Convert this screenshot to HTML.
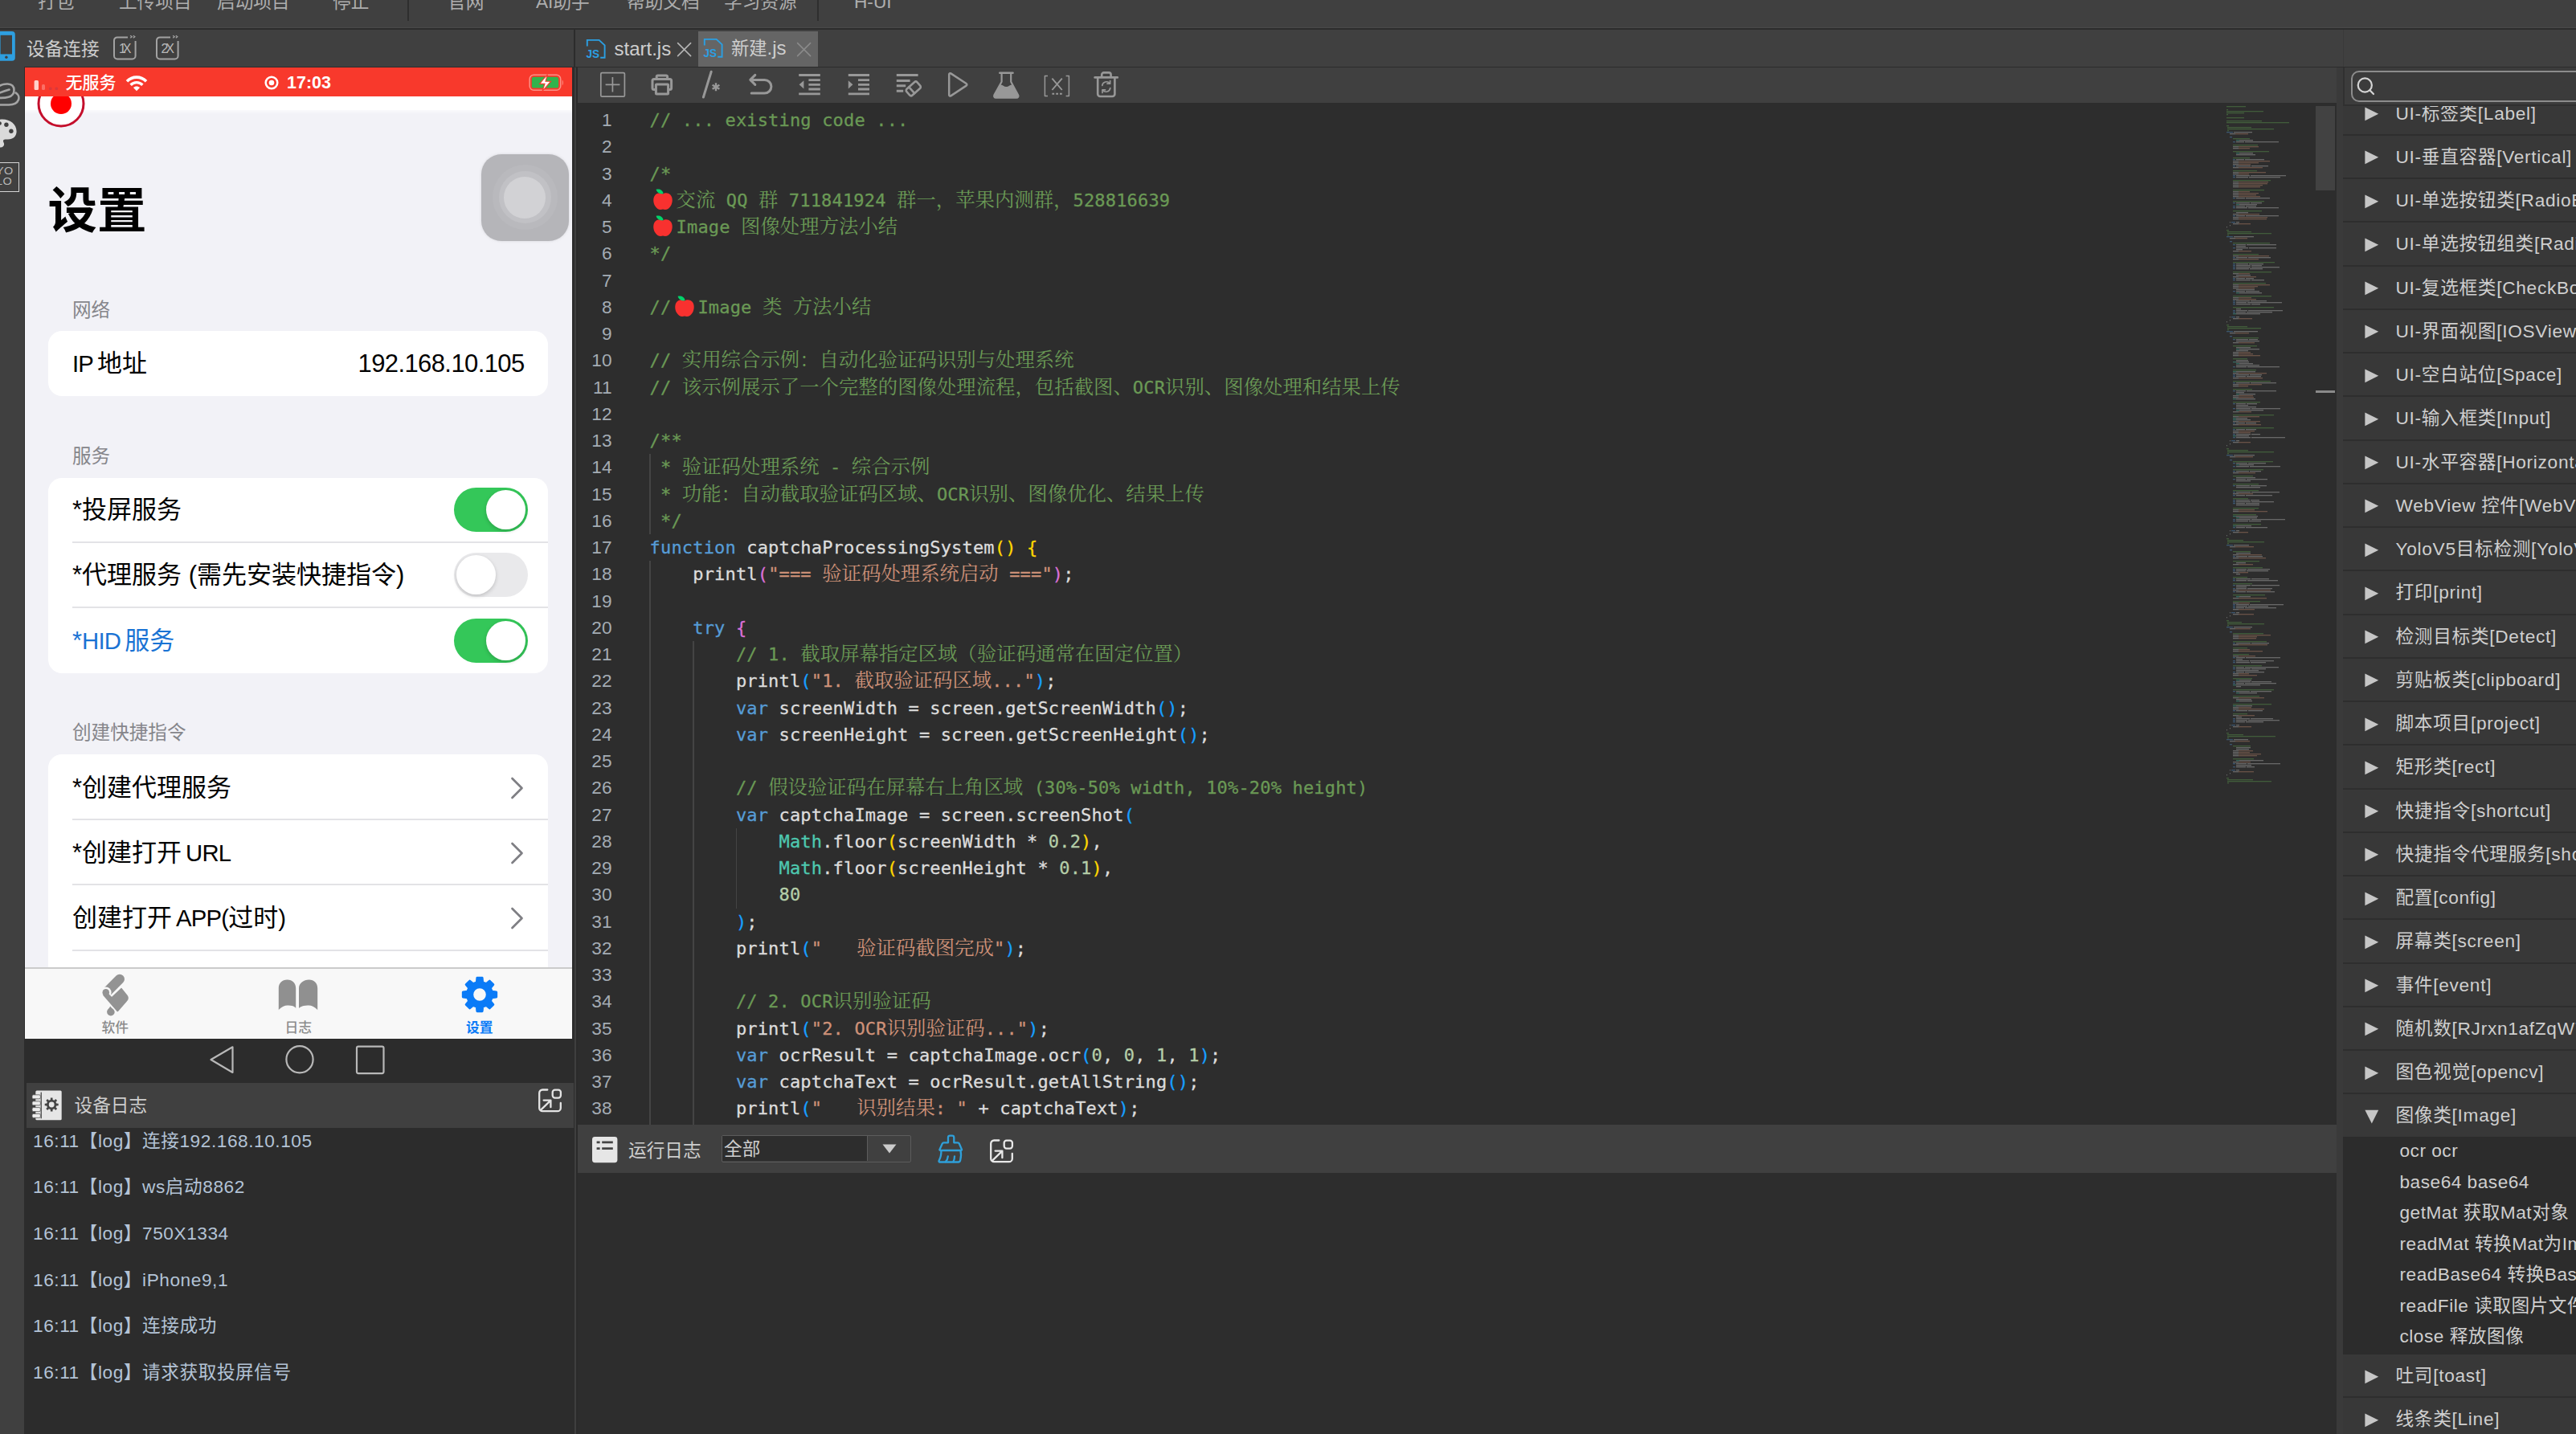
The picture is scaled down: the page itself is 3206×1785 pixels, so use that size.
<!DOCTYPE html>
<html lang="zh-CN">
<head>
<meta charset="utf-8">
<title>IDE</title>
<style>
html,body{margin:0;padding:0}
body{width:3206px;height:1785px;overflow:hidden;background:#2c2c2c;position:relative;
 font-family:"Liberation Sans","Noto Sans CJK SC",sans-serif;font-size:22.67px;color:#c8c8c8}
div,svg{position:absolute;box-sizing:border-box}
.t{white-space:nowrap;line-height:30px;height:30px}
svg{overflow:visible}
/* top menu */
#topbar{left:0;top:0;width:3206px;height:34px;background:#404040;overflow:hidden}
#topbar .t{top:-13px;color:#aeaeae}
#topbar i{position:absolute;top:0;width:2px;height:26px;background:#2e2e2e}
/* left */
#lhead{left:0;top:37px;width:714px;height:46px;background:#404040;overflow:hidden}
#side{left:0;top:83px;width:30px;height:1702px;background:#404040;overflow:hidden}
#phone{left:31px;top:84px;width:681px;height:1209px;background:#f2f2f7;overflow:hidden;color:#000;
 font-family:"Liberation Sans","Noto Sans CJK SC",sans-serif}
#phone .card{left:29px;width:622px;background:#fff;border-radius:17px;overflow:hidden}
#phone .lab{left:59px;font-size:23.6px;color:#86868b;line-height:30px;white-space:nowrap}
#phone .row{left:59px;font-size:31px;word-spacing:-3.6px;line-height:40px;white-space:nowrap;color:#000}
#phone .la{font-size:29.3px;letter-spacing:-.8px}
#phone .sep{left:59px;width:592px;height:2px;background:#e3e3e6}
.tog{left:533.5px;width:92px;height:55px;border-radius:28px;background:#34c759}
.tog b{position:absolute;right:3px;top:3px;width:49px;height:49px;border-radius:50%;background:#fff;box-shadow:0 2px 5px rgba(0,0,0,.18)}
.tog.off{background:#e9e9eb}
.tog.off b{right:auto;left:3px}
#dlhead{left:33px;top:1347.5px;width:681px;height:56px;background:#404040}
.log{left:41px;letter-spacing:.55px;color:#b3c3d6;white-space:nowrap;line-height:30px;height:30px}
/* editor */
#tabbar{left:716px;top:37px;width:2490px;height:46px;background:#404040}
#toolbar{left:717px;top:84px;width:2191px;height:44px;background:#404040}
#code{left:717px;top:128px;width:2191px;height:1271.5px;background:#2d2d2d;overflow:hidden}
#runhead{left:716px;top:1399.5px;width:2192px;height:60px;background:#404040}
#runbody{left:717px;top:1459.5px;width:2191px;height:326px;background:#2d2d2d}
.ln{left:0;width:44.5px;text-align:right;color:#a4acb4;font-size:22.67px;line-height:33.25px;height:33.25px;white-space:nowrap}
.cl{left:91.6px;font-family:"DejaVu Sans Mono","Liberation Mono","Noto Serif CJK SC",monospace;font-size:22px;letter-spacing:.166px;line-height:33.25px;height:33.25px;white-space:pre;color:#dcdcdc;-webkit-text-stroke:.3px}
.cl .z{font-family:"Noto Serif CJK SC",serif;font-size:24.4px;letter-spacing:0;line-height:0;-webkit-text-stroke:0}
.c{color:#6a9955}.k{color:#569cd6}.s{color:#ce9178}.n{color:#b5cea8}.m{color:#4ec9b0}
.b1{color:#ffd700}.b2{color:#da70d6}.b3{color:#179fff}
.ig{width:1.5px;background:#444}
.ap{display:inline-block;position:relative;width:33px;height:20px;vertical-align:baseline}
.aps{left:3.4px;top:-2.3px}
.gp{display:inline-block;width:43px}
/* right */
#gap{left:2908px;top:84px;width:8px;height:1701px;background:#3a3a3a}
#rp{left:2916px;top:84px;width:290px;height:1701px;background:#383838;overflow:hidden}
.tr{left:0;width:290px;height:54.25px;border-bottom:2px solid #2e2e2e}
.tr .t{left:65.5px;top:11px;color:#cfcfcf;letter-spacing:.7px}
.tr svg{left:27px;top:18.5px}
.ch{left:70.5px;letter-spacing:.5px;color:#cfcfcf;white-space:nowrap;line-height:30px;height:30px}
</style>
</head>
<body>
<!-- ===== top menu ===== -->
<div id="topbar">
 <div class="t" style="left:47px">打包</div>
 <div class="t" style="left:148px">上传项目</div>
 <div class="t" style="left:270px">启动项目</div>
 <div class="t" style="left:414px">停止</div>
 <i style="left:507px"></i>
 <div class="t" style="left:557px">官网</div>
 <div class="t" style="left:667px">AI助手</div>
 <div class="t" style="left:780px">帮助文档</div>
 <div class="t" style="left:901px">学习资源</div>
 <i style="left:1017px"></i>
 <div class="t" style="left:1063px">H-UI</div>
</div>
<div style="left:0;top:34px;width:3206px;height:1px;background:#494949"></div>

<!-- ===== left header ===== -->
<div id="lhead">
 <svg width="22" height="37" style="left:-3px;top:1.7px" viewBox="0 0 22 37">
  <rect x="0" y="0" width="21.8" height="36.7" rx="4" fill="#2e9fe0"/>
  <rect x="3.6" y="4.8" width="14.4" height="23.6" fill="#404040"/>
  <circle cx="10.9" cy="32.2" r="1.7" fill="#404040"/>
 </svg>
 <div class="t" style="left:33px;top:9px;color:#cdcdcd">设备连接</div>
 <svg width="32" height="32" style="left:140px;top:6px" viewBox="0 0 32 32" fill="none" stroke="#a2a2a2" stroke-width="2">
  <path d="M19 3.4H6a4 4 0 0 0-4 4V26.4a4 4 0 0 0 4 4H24.6a4 4 0 0 0 4-4V8"/>
  <path d="M22.2 1.2l2 1.5-2 1.5M25.8 1.2l2 1.5-2 1.5" stroke-width="1.3"/>
  <text x="8" y="22.5" font-family="Liberation Sans, sans-serif" font-size="16" fill="#b8b8b8" stroke="none" textLength="15.5">1X</text>
 </svg>
 <svg width="32" height="32" style="left:192.5px;top:6px" viewBox="0 0 32 32" fill="none" stroke="#a2a2a2" stroke-width="2">
  <path d="M19 3.4H6a4 4 0 0 0-4 4V26.4a4 4 0 0 0 4 4H24.6a4 4 0 0 0 4-4V8"/>
  <path d="M22.2 1.2l2 1.5-2 1.5M25.8 1.2l2 1.5-2 1.5" stroke-width="1.3"/>
  <text x="7.4" y="22.5" font-family="Liberation Sans, sans-serif" font-size="16" fill="#b8b8b8" stroke="none" textLength="16.5">2X</text>
 </svg>
</div>

<!-- ===== left icon strip ===== -->
<div id="side">
 <svg width="30" height="60" style="left:0;top:10px" viewBox="0 0 30 60" fill="none" stroke="#a4a4a4" stroke-width="2.6" stroke-linecap="round">
  <path d="M-3 15.5C3 10.5 17.5 8.5 17.5 19.2C17.5 28.8 6 29.3 -3 28.8"/>
  <path d="M-3 23.5C3 21 8 19.5 11.5 18.5"/>
  <path d="M19.5 22.5C26 26 25 37.5 11 37.5L-3 37.5"/>
 </svg>
 <svg width="30" height="40" style="left:0;top:64px" viewBox="0 0 30 40">
  <path d="M-14 18C-14 8 -6 1.5 3 1.5C13 1.5 20.6 8 20.6 16.5C20.6 23 16 26.5 10 26.5L6.5 26.5C4 26.5 3.4 28.5 4.6 30.5C6 33 4.5 36.5 0.5 36.5C-8 36.5 -14 28 -14 18Z" fill="#dadada"/>
  <circle cx="7.9" cy="8.3" r="2.7" fill="#404040"/>
  <circle cx="13.9" cy="16.2" r="2.7" fill="#404040"/>
  <circle cx="-0.5" cy="6.5" r="2.4" fill="#404040"/>
 </svg>
 <div style="left:-10px;top:118.5px;width:34px;height:37px;border:1.6px solid #d4d4d4"></div>
 <div style="left:-5px;top:124px;font-size:12px;line-height:12.6px;color:#b9b9b9;letter-spacing:.4px;transform:scaleX(1.2);transform-origin:0 0;white-space:nowrap">YO<br>LO</div>
</div>
<!-- ===== phone mirror ===== -->
<div style="left:715px;top:84px;width:2px;height:1701px;background:#3f3f3f"></div>
<div id="phone">
 <!-- white strip under status bar -->
 <div style="left:0;top:36px;width:681px;height:17px;background:#fff"></div>
 <div style="left:0;top:53px;width:681px;height:5px;background:linear-gradient(#fafafc,#f2f2f7)"></div>
 <!-- record indicator -->
 <svg width="64" height="64" style="left:13.4px;top:13px" viewBox="0 0 64 64">
  <circle cx="32" cy="32" r="28" fill="#fff" stroke="#c40f2c" stroke-width="3"/>
  <circle cx="32" cy="32" r="13" fill="#ff0000"/>
 </svg>
 <!-- status bar -->
 <div style="left:0;top:0;width:681px;height:36px;background:#f8392c"></div>
 <svg width="36" height="16" style="left:11px;top:14px" viewBox="0 0 36 16">
  <rect x="0.6" y="2" width="5.4" height="12" rx="1.5" fill="#ffd0ca"/>
  <rect x="10" y="7" width="4" height="7" rx="1.5" fill="#fb7066"/>
  <rect x="19" y="10.5" width="3.6" height="3.5" rx="1.5" fill="#d9383a"/>
  <rect x="26.5" y="10.5" width="3.6" height="3.5" rx="1.5" fill="#d9383a"/>
 </svg>
 <div class="t" style="left:50.5px;top:4.4px;color:#fff;font-size:21px;font-weight:500">无服务</div>
 <svg width="28" height="21" style="left:124.5px;top:8.6px" viewBox="0 0 28 21" fill="none" stroke="#fff" stroke-width="3.6">
  <path d="M2 8.2C8.6 1.4 19.4 1.4 26 8.2"/>
  <path d="M6.6 12.8C10.8 8.6 17.2 8.6 21.4 12.8" stroke-width="3.4"/>
  <path d="M14 20.3L9.9 16.1C12.2 13.9 15.8 13.9 18.1 16.1Z" fill="#fff" stroke="none"/>
 </svg>
 <svg width="20" height="20" style="left:297px;top:9.4px" viewBox="0 0 20 20">
  <circle cx="10" cy="10" r="7.3" fill="none" stroke="#fff" stroke-width="2.5"/>
  <circle cx="10" cy="10" r="3.3" fill="#fff"/>
 </svg>
 <div class="t" style="left:326px;top:4.4px;color:#fff;font-size:21.5px;font-weight:700">17:03</div>
 <svg width="46" height="22" style="left:627px;top:7.5px" viewBox="0 0 46 22">
  <rect x="1.2" y="1.2" width="38.5" height="19" rx="5" fill="none" stroke="#fb9186" stroke-width="1.5"/>
  <rect x="3.8" y="3.8" width="33.3" height="13.8" rx="2.6" fill="#32b34c"/>
  <path d="M41.6 7.6C43.6 8.2 43.6 13.8 41.6 14.4Z" fill="#fb7c70"/>
  <path d="M23.5 0.5L13.5 12.4H20L17 21.5L27.6 9.2H21Z" fill="#fff" stroke="#f8392c" stroke-width="1.1"/>
 </svg>

 <!-- big title -->
 <div class="t" style="left:28.5px;top:148px;font-size:61.5px;font-weight:700;line-height:62px;height:62px;color:#000">设置</div>
 <!-- assistive touch -->
 <div style="left:568px;top:107.5px;width:108.5px;height:108.5px;border-radius:25px;background:#b5b5b9;box-shadow:0 0 3px rgba(181,181,185,.5)">
  <div style="left:13.5px;top:13.5px;width:81px;height:81px;border-radius:50%;background:#b9b9bd"></div>
  <div style="left:21.5px;top:21.5px;width:65px;height:65px;border-radius:50%;background:#c1c1c5"></div>
  <div style="left:28px;top:28px;width:52px;height:52px;border-radius:50%;background:#d2d2d5"></div>
 </div>

 <!-- 网络 -->
 <div class="lab" style="top:286.5px">网络</div>
 <div class="card" style="top:328px;height:81px"></div>
 <div class="row" style="top:349px"><span class="la">IP</span> 地址</div>
 <div class="row" style="left:auto;right:59.4px;top:349px;letter-spacing:-.6px">192.168.10.105</div>

 <!-- 服务 -->
 <div class="lab" style="top:469px">服务</div>
 <div class="card" style="top:510.5px;height:243.5px"></div>
 <div class="row" style="top:531px">*投屏服务</div>
 <div class="tog" style="top:522.5px"><b></b></div>
 <div class="sep" style="top:590px"></div>
 <div class="row" style="top:612px;word-spacing:0">*代理服务 (需先安装快捷指令)</div>
 <div class="tog off" style="top:604px"><b></b></div>
 <div class="sep" style="top:671.4px"></div>
 <div class="row" style="top:693.5px;color:#1a73d4">*<span class="la">HID</span> 服务</div>
 <div class="tog" style="top:685.5px"><b></b></div>

 <!-- 创建快捷指令 -->
 <div class="lab" style="top:813px">创建快捷指令</div>
 <div class="card" style="top:854.6px;height:400px"></div>
 <div class="row" style="top:876.6px">*创建代理服务</div>
 <div class="sep" style="top:935px"></div>
 <div class="row" style="top:957.6px">*创建打开 <span class="la">URL</span></div>
 <div class="sep" style="top:1015.8px"></div>
 <div class="row" style="top:1039px">创建打开 <span class="la">APP(</span>过时<span class="la">)</span></div>
 <div class="sep" style="top:1097.5px"></div>
 <svg width="18" height="28" style="left:603.8px;top:882.6px" viewBox="0 0 18 28" fill="none" stroke="#7f7f84" stroke-width="2.7" stroke-linecap="round" stroke-linejoin="round"><path d="M2.5 2L14.5 14L2.5 26"/></svg>
 <svg width="18" height="28" style="left:603.8px;top:963.6px" viewBox="0 0 18 28" fill="none" stroke="#7f7f84" stroke-width="2.7" stroke-linecap="round" stroke-linejoin="round"><path d="M2.5 2L14.5 14L2.5 26"/></svg>
 <svg width="18" height="28" style="left:603.8px;top:1045px" viewBox="0 0 18 28" fill="none" stroke="#7f7f84" stroke-width="2.7" stroke-linecap="round" stroke-linejoin="round"><path d="M2.5 2L14.5 14L2.5 26"/></svg>

 <!-- tab bar -->
 <div style="left:0;top:1119.5px;width:681px;height:90px;background:#f8f8f8;border-top:2px solid #cbcbcb"></div>
 <svg width="40" height="56" style="left:93px;top:1126px" viewBox="0 0 40 56">
  <path d="M24.9 8.8L10 23.7" stroke="#939393" stroke-width="12.2" stroke-linecap="round" fill="none"/>
  <circle cx="7.76" cy="25.4" r="6.8" fill="#f8f8f8"/>
  <path d="M5.2 28.7L22.3 48.3L33.2 35.9Q36.2 33 34 29.6L27 20.8L15 32.2L10.5 27.6Z" fill="#939393" stroke="#939393" stroke-width="1.8" stroke-linejoin="round"/>
  <circle cx="7.76" cy="25.4" r="4.3" fill="#939393"/>
  <path d="M13.2 42.4C15 45.2 18.7 46.6 18.7 49.7A4.8 4.8 0 1 1 9.1 49.7C9.1 46.6 12 45.2 13.2 42.4Z" fill="#939393"/>
 </svg>
 <div class="t" style="left:95.5px;top:1180.5px;font-size:16.8px;color:#8b8b8b;font-weight:500">软件</div>
 <svg width="50" height="40" style="left:315px;top:1135px" viewBox="0 0 50 40" fill="#909090">
  <path d="M0.8 38.2V11C0.8 5 5 0.6 11.5 0.6C18 0.6 22.2 5 22.2 11V36C22.2 36 20 32 11.5 32.6C5 33 0.8 38.2 0.8 38.2Z"/>
  <path d="M49.2 38.2V11C49.2 5 45 0.6 38.5 0.6C32 0.6 26 5 26 11V36C26 36 30 32 38.5 32.6C45 33 49.2 38.2 49.2 38.2Z"/>
 </svg>
 <div class="t" style="left:323.5px;top:1180.5px;font-size:16.8px;color:#8b8b8b;font-weight:500">日志</div>
 <svg width="48" height="48" style="left:541.8px;top:1129.7px" viewBox="-24 -24 48 48"><path fill="#0b7bf7" stroke="#0b7bf7" stroke-width="3" stroke-linejoin="round" fill-rule="evenodd" d="M-3.64 -15.17 L-3.11 -20.67 L3.11 -20.67 L3.64 -15.17 L8.15 -13.30 L12.42 -16.81 L16.81 -12.42 L13.30 -8.15 L15.17 -3.64 L20.67 -3.11 L20.67 3.11 L15.17 3.64 L13.30 8.15 L16.81 12.42 L12.42 16.81 L8.15 13.30 L3.64 15.17 L3.11 20.67 L-3.11 20.67 L-3.64 15.17 L-8.15 13.30 L-12.42 16.81 L-16.81 12.42 L-13.30 8.15 L-15.17 3.64 L-20.67 3.11 L-20.67 -3.11 L-15.17 -3.64 L-13.30 -8.15 L-16.81 -12.42 L-12.42 -16.81 L-8.15 -13.30Z M9.30 0A9.30 9.30 0 1 0 -9.30 0A9.30 9.30 0 1 0 9.30 0Z"/></svg>
 <div class="t" style="left:549px;top:1180.5px;font-size:16.8px;color:#0b7bf7;font-weight:700">设置</div>
</div>

<!-- android style nav buttons -->
<svg width="681" height="53" style="left:31px;top:1293.5px" viewBox="0 0 681 53" fill="none" stroke="#b8b8b8" stroke-width="2.2" stroke-linejoin="round">
 <path d="M231.5 25L258.5 9.3V41Z"/>
 <circle cx="342" cy="24.8" r="16.6"/>
 <rect x="413" y="8.6" width="33.5" height="33.5" rx="2"/>
</svg>

<!-- device log -->
<div id="dlhead">
 <svg width="40" height="40" style="left:6px;top:8px" viewBox="0 0 40 40">
  <rect x="5.3" y="1.6" width="32.4" height="36.7" rx="1.5" fill="#e6e6e6"/>
  <rect x="11.6" y="3.6" width="1.3" height="32.7" fill="#4a4a4a"/>
  <g fill="#ececec" stroke="#555" stroke-width=".8"><rect x="1" y="6.8" width="10.4" height="5" rx="1.6"/><rect x="1" y="14.8" width="10.4" height="5" rx="1.6"/><rect x="1" y="22.6" width="10.4" height="5" rx="1.6"/><rect x="1" y="30.4" width="10.4" height="5" rx="1.6"/></g>
  <path fill="#454545" fill-rule="evenodd" transform="translate(25.2 19)" d="M-1.39 -6.04 L-1.31 -8.50 L1.31 -8.50 L1.39 -6.04 L3.29 -5.25 L5.08 -6.94 L6.94 -5.08 L5.25 -3.29 L6.04 -1.39 L8.50 -1.31 L8.50 1.31 L6.04 1.39 L5.25 3.29 L6.94 5.08 L5.08 6.94 L3.29 5.25 L1.39 6.04 L1.31 8.50 L-1.31 8.50 L-1.39 6.04 L-3.29 5.25 L-5.08 6.94 L-6.94 5.08 L-5.25 3.29 L-6.04 1.39 L-8.50 1.31 L-8.50 -1.31 L-6.04 -1.39 L-5.25 -3.29 L-6.94 -5.08 L-5.08 -6.94 L-3.29 -5.25Z M3.40 0A3.40 3.40 0 1 0 -3.40 0A3.40 3.40 0 1 0 3.40 0Z"/>
 </svg>
 <div class="t" style="left:59.5px;top:13.5px;color:#cdcdcd">设备日志</div>
 <svg width="32" height="32" style="left:635.5px;top:6px" viewBox="0 0 32 32" fill="none" stroke="#e4e4e4" stroke-width="2.3" stroke-linecap="round" stroke-linejoin="round">
  <path d="M12.3 2.5H6.2a4 4 0 0 0-4 4V25.2a4 4 0 0 0 4 4H24.8a4 4 0 0 0 4-4V19"/>
  <rect x="18.7" y="2.6" width="10.2" height="10" rx="3"/>
  <path d="M3.8 27.8L16.2 15.8M7.6 15.6H16.4V24.2"/>
 </svg>
</div>
<div class="log" style="top:1404.5px">16:11【log】连接192.168.10.105</div>
<div class="log" style="top:1462.2px">16:11【log】ws启动8862</div>
<div class="log" style="top:1519.9px">16:11【log】750X1334</div>
<div class="log" style="top:1577.6px">16:11【log】iPhone9,1</div>
<div class="log" style="top:1635.3px">16:11【log】连接成功</div>
<div class="log" style="top:1693.0px">16:11【log】请求获取投屏信号</div>
<!-- ===== editor tabs ===== -->
<div id="tabbar">
 <div style="left:152.5px;top:2px;width:149.5px;height:43.5px;background:#656565"></div>
 <svg width="26" height="26" style="left:13px;top:11px" viewBox="0 0 26 26" fill="none" stroke="#2b9fe2" stroke-width="1.9">
  <path d="M1.8 9.5V1.9H16.6L23.6 8.4V23.8H18.2"/>
  <text x="0.6" y="24.2" font-family="Liberation Sans, sans-serif" font-size="14.5" font-weight="700" fill="#2b9fe2" stroke="none" textLength="16.5" lengthAdjust="spacingAndGlyphs">JS</text>
 </svg>
 <div class="t" style="left:48.5px;top:9.2px;font-size:24px;color:#cecece">start.js</div>
 <svg width="20" height="20" style="left:126px;top:15px" viewBox="0 0 20 20" stroke="#b4b4b4" stroke-width="1.6" stroke-linecap="round"><path d="M1.6 1.6L17.6 17.6M17.6 1.6L1.6 17.6"/></svg>
 <svg width="26" height="26" style="left:158.7px;top:9.6px" viewBox="0 0 26 26" fill="none" stroke="#2b9fe2" stroke-width="1.9">
  <path d="M1.8 9.5V1.9H16.6L23.6 8.4V23.8H18.2"/>
  <text x="0.6" y="24.2" font-family="Liberation Sans, sans-serif" font-size="14.5" font-weight="700" fill="#2b9fe2" stroke="none" textLength="16.5" lengthAdjust="spacingAndGlyphs">JS</text>
 </svg>
 <div class="t" style="left:194px;top:8px;font-size:24px;color:#cecece"><span style="font-size:22.3px">新建</span>.js</div>
 <svg width="20" height="20" style="left:275px;top:15px" viewBox="0 0 20 20" stroke="#8a8a8a" stroke-width="1.6" stroke-linecap="round"><path d="M1.6 1.6L17.6 17.6M17.6 1.6L1.6 17.6"/></svg>
 <div style="left:2200px;top:0;width:1px;height:46px;background:#3a3a3a"></div>
</div>

<!-- ===== editor toolbar (coords relative to 717,84) ===== -->
<div id="toolbar">
<svg width="2191" height="44" viewBox="717 84 2191 44" style="left:0;top:0" fill="none" stroke="#989898" stroke-linecap="round" stroke-linejoin="round">
 <!-- new -->
 <rect x="747.8" y="90.6" width="29.6" height="29.6" rx="1.5" stroke-width="1.7"/>
 <path d="M753.6 105.3H771.4M762.4 96V114.6" stroke-width="1.7" stroke-linecap="butt"/>
 <!-- print -->
 <g stroke-width="3">
  <path d="M817.2 98.4V95.5a1.6 1.6 0 0 1 1.6-1.6H829a1.6 1.6 0 0 1 1.6 1.6V98.4"/>
  <path d="M815.6 111.6H814a2 2 0 0 1-2-2V100.4a2 2 0 0 1 2-2H833.6a2 2 0 0 1 2 2V109.6a2 2 0 0 1-2 2H832.4"/>
  <rect x="816.4" y="105" width="15.2" height="12" rx="0.8"/>
 </g>
 <!-- comment -->
 <path d="M885.2 89.3L875.4 121" stroke-width="3"/>
 <path d="M891 103.3V113.3M886.6 105.8L895.4 110.8M895.4 105.8L886.6 110.8" stroke-width="2.4" stroke-linecap="butt"/>
 <!-- undo -->
 <path d="M939.8 93.4L933.8 99.4L939.8 105.4M934.4 99.4H951.6a8.3 8.3 0 0 1 0 16.6H935.2" stroke-width="3"/>
 <!-- outdent -->
 <g stroke-width="2.8" stroke-linecap="butt">
  <path d="M994.2 93.5H1020.8M1006.4 99.6H1020.8M1006.4 105.3H1020.8M1006.4 111H1020.8M994.2 116.9H1020.8"/>
  <path d="M994.6 105.3L1000.4 100.2V110.4Z" fill="#989898" stroke="none"/>
 </g>
 <!-- indent -->
 <g stroke-width="2.8" stroke-linecap="butt">
  <path d="M1055.8 93.5H1082M1068 99.6H1082M1068 105.3H1082M1068 111H1082M1055.8 116.9H1082"/>
  <path d="M1061.4 105.3L1055.8 100.2V110.4Z" fill="#989898" stroke="none"/>
 </g>
 <!-- format / eraser -->
 <g stroke-width="3" stroke-linecap="butt">
  <path d="M1115.8 93.6H1142.6M1115.8 100.4H1132.6M1115.8 106.8H1127.2M1115.8 113.3H1124.2"/>
 </g>
 <g transform="translate(1136.8 110.4) rotate(-42)" stroke-width="2.6">
  <rect x="-8.8" y="-5.2" width="17.6" height="10.4" rx="2.4" fill="#404040"/>
  <path d="M-2.8 -5.2V5.2"/>
 </g>
 <!-- run -->
 <path d="M1181.2 92.6V118.2a1.4 1.4 0 0 0 2.1 1.2L1202.6 106.6a1.5 1.5 0 0 0 0-2.6L1183.3 91.4a1.4 1.4 0 0 0-2.1 1.2Z" stroke-width="2.5"/>
 <!-- flask -->
 <path d="M1244.2 90.8H1260.6" stroke-width="2.4"/>
 <path d="M1246.6 91V101.8L1237.4 118.4a2.2 2.2 0 0 0 2 3.2H1265.2a2.2 2.2 0 0 0 2-3.2L1258.2 101.8V91" stroke-width="2.2"/>
 <path d="M1244.8 105.6C1247.6 104.6 1249 108 1252.4 108C1255.8 108 1257.2 104.6 1260 105.6L1267 118.6a2 2 0 0 1-1.8 3H1239.6a2 2 0 0 1-1.8-3Z" fill="#989898" stroke="none"/>
 <!-- variable -->
 <g stroke-width="1.5" stroke-linecap="butt">
  <path d="M1304 94.4H1300.4V119.4H1304M1326.6 94.4H1330.4V119.4H1326.6"/>
  <path d="M1309.4 97.6L1321.8 112M1321.8 97.6L1309.4 112" stroke-width="1.9"/>
  <path d="M1309.4 116.8H1312.2M1314.2 116.8H1317M1319 116.8H1321.8" stroke-width="2"/>
 </g>
 <!-- trash -->
 <g stroke-width="2.6">
  <path d="M1362.6 96.4H1390.8"/>
  <path d="M1371.2 96V93a2.6 2.6 0 0 1 2.6-2.6H1380a2.6 2.6 0 0 1 2.6 2.6V96"/>
  <path d="M1366.2 97V117a3 3 0 0 0 3 3H1384.4a3 3 0 0 0 3-3V97"/>
 </g>
 <g stroke-width="1.7">
  <path d="M1371.8 106.4a5.3 5.3 0 0 1 9.4-2.6M1381.8 109.6a5.3 5.3 0 0 1-9.4 2.6"/>
  <path d="M1381.6 100.6V104.2H1378M1372 115.4V111.8H1375.6"/>
 </g>
</svg>
</div>

<!-- ===== run log header ===== -->
<div id="runhead">
 <svg width="34" height="34" style="left:20px;top:14px" viewBox="0 0 34 34">
  <rect x="1" y="1" width="31.4" height="32.2" rx="3.4" fill="#e6e6e6"/>
  <path d="M6.6 7.9H10.6M13.2 7.9H26.8M6.6 15.7H10.6M13.2 15.7H26.8" stroke="#454545" stroke-width="2.8"/>
 </svg>
 <div class="t" style="left:66px;top:17.5px;color:#cdcdcd">运行日志</div>
 <div style="left:181.5px;top:13px;width:236px;height:34px;border:1.5px solid #5c5c5c;border-radius:2px;background:#404040">
  <div style="left:0;top:0;width:181px;height:31px;background:#2d2d2d;border-right:1.5px solid #5c5c5c"></div>
  <div class="t" style="left:2.5px;top:1px;color:#cdcdcd">全部</div>
  <svg width="18" height="12" style="left:199px;top:10px" viewBox="0 0 18 12"><path d="M0.5 0.5H17.5L9 11.5Z" fill="#cbcbcb"/></svg>
 </div>
 <svg width="34" height="38" style="left:450px;top:11px" viewBox="1166 1410.5 34 38" fill="none" stroke="#2f9fd9" stroke-width="2.3" stroke-linecap="round" stroke-linejoin="round">
  <path d="M1180 1421.8V1415.4a2.3 2.3 0 0 1 2.3-2.3H1185a2.3 2.3 0 0 1 2.3 2.3V1421.8H1192a2 2 0 0 1 1.8 1.2L1197 1430.4a0.8 0.8 0 0 1-.8 1.1H1170.2a0.8 0.8 0 0 1-.8-1.1L1172.8 1423a2 2 0 0 1 1.8-1.2Z"/>
  <path d="M1171.4 1431.8C1171.6 1437 1170.4 1441 1168.6 1444.2a1.2 1.2 0 0 0 1 1.8H1192.6a2.6 2.6 0 0 0 2.5-2C1196.2 1439.6 1196.4 1435.6 1195.4 1431.8"/>
  <path d="M1179.8 1438.8C1179.6 1441.4 1178.6 1443.8 1176.8 1445.6M1188 1438.8C1188 1441.4 1187.4 1443.8 1186.4 1445.6"/>
 </svg>
 <svg width="32" height="32" style="left:515px;top:17.5px" viewBox="0 0 32 32" fill="none" stroke="#e8e8e8" stroke-width="2.3" stroke-linecap="round" stroke-linejoin="round">
  <path d="M12.3 2.5H6.2a4 4 0 0 0-4 4V25.2a4 4 0 0 0 4 4H24.8a4 4 0 0 0 4-4V19"/>
  <rect x="18.7" y="2.6" width="10.2" height="10" rx="3"/>
  <path d="M3.8 27.8L16.2 15.8M7.6 15.6H16.4V24.2"/>
 </svg>
</div>
<div id="runbody"></div>
<div id="code">
<div class="ig" style="left:91.4px;top:437.2px;height:99.8px"></div>
<div class="ig" style="left:91.4px;top:570.2px;height:731.5px"></div>
<div class="ig" style="left:145.0px;top:670.0px;height:631.8px"></div>
<div class="ig" style="left:198.7px;top:902.8px;height:99.8px"></div>
<div class="ln" style="top:5.0px">1</div>
<div class="cl" style="top:5.0px"><span class="c">// ... existing code ...</span></div>
<div class="ln" style="top:38.2px">2</div>
<div class="ln" style="top:71.5px">3</div>
<div class="cl" style="top:71.5px"><span class="c">/*</span></div>
<div class="ln" style="top:104.8px">4</div>
<div class="cl" style="top:104.8px"><span class="c"><span class="ap"><svg class="aps" width="26" height="27" viewBox="0 0 26 27"><path d="M13 6.6C10.6 4.6 6.4 4.6 3.6 7.4C0.6 10.6 0.6 16.6 3 21C5.2 25 8.8 27 13 25.6C17.2 27 20.8 25 23 21C25.4 16.6 25.4 10.6 22.4 7.4C19.6 4.6 15.4 4.6 13 6.6Z" fill="#f8312f"/><path d="M4.6 0.8C9 -0.2 13 1.8 13.6 6.2C9.4 7 5.4 4.8 4.6 0.8Z" fill="#00d26a"/></svg></span><span class="z">交流</span> QQ <span class="z">群</span> 711841924 <span class="z">群一，苹果内测群，</span>528816639</span></div>
<div class="ln" style="top:138.0px">5</div>
<div class="cl" style="top:138.0px"><span class="c"><span class="ap"><svg class="aps" width="26" height="27" viewBox="0 0 26 27"><path d="M13 6.6C10.6 4.6 6.4 4.6 3.6 7.4C0.6 10.6 0.6 16.6 3 21C5.2 25 8.8 27 13 25.6C17.2 27 20.8 25 23 21C25.4 16.6 25.4 10.6 22.4 7.4C19.6 4.6 15.4 4.6 13 6.6Z" fill="#f8312f"/><path d="M4.6 0.8C9 -0.2 13 1.8 13.6 6.2C9.4 7 5.4 4.8 4.6 0.8Z" fill="#00d26a"/></svg></span>Image <span class="z">图像处理方法小结</span></span></div>
<div class="ln" style="top:171.2px">6</div>
<div class="cl" style="top:171.2px"><span class="c">*/</span></div>
<div class="ln" style="top:204.5px">7</div>
<div class="ln" style="top:237.8px">8</div>
<div class="cl" style="top:237.8px"><span class="c">//<span class="ap"><svg class="aps" width="26" height="27" viewBox="0 0 26 27"><path d="M13 6.6C10.6 4.6 6.4 4.6 3.6 7.4C0.6 10.6 0.6 16.6 3 21C5.2 25 8.8 27 13 25.6C17.2 27 20.8 25 23 21C25.4 16.6 25.4 10.6 22.4 7.4C19.6 4.6 15.4 4.6 13 6.6Z" fill="#f8312f"/><path d="M4.6 0.8C9 -0.2 13 1.8 13.6 6.2C9.4 7 5.4 4.8 4.6 0.8Z" fill="#00d26a"/></svg></span>Image <span class="z">类</span> <span class="z">方法小结</span></span></div>
<div class="ln" style="top:271.0px">9</div>
<div class="ln" style="top:304.2px">10</div>
<div class="cl" style="top:304.2px"><span class="c">// <span class="z">实用综合示例：自动化验证码识别与处理系统</span></span></div>
<div class="ln" style="top:337.5px">11</div>
<div class="cl" style="top:337.5px"><span class="c">// <span class="z">该示例展示了一个完整的图像处理流程，包括截图、</span>OCR<span class="z">识别、图像处理和结果上传</span></span></div>
<div class="ln" style="top:370.8px">12</div>
<div class="ln" style="top:404.0px">13</div>
<div class="cl" style="top:404.0px"><span class="c">/**</span></div>
<div class="ln" style="top:437.2px">14</div>
<div class="cl" style="top:437.2px"><span class="c"> * <span class="z">验证码处理系统</span> - <span class="z">综合示例</span></span></div>
<div class="ln" style="top:470.5px">15</div>
<div class="cl" style="top:470.5px"><span class="c"> * <span class="z">功能：自动截取验证码区域、</span>OCR<span class="z">识别、图像优化、结果上传</span></span></div>
<div class="ln" style="top:503.8px">16</div>
<div class="cl" style="top:503.8px"><span class="c"> */</span></div>
<div class="ln" style="top:537.0px">17</div>
<div class="cl" style="top:537.0px"><span class="k">function</span> captchaProcessingSystem<span class="b1">()</span> <span class="b1">{</span></div>
<div class="ln" style="top:570.2px">18</div>
<div class="cl" style="top:570.2px">    printl<span class="b2">(</span><span class="s">"=== <span class="z">验证码处理系统启动</span> ==="</span><span class="b2">)</span>;</div>
<div class="ln" style="top:603.5px">19</div>
<div class="ln" style="top:636.8px">20</div>
<div class="cl" style="top:636.8px">    <span class="k">try</span> <span class="b2">{</span></div>
<div class="ln" style="top:670.0px">21</div>
<div class="cl" style="top:670.0px">        <span class="c">// 1. <span class="z">截取屏幕指定区域（验证码通常在固定位置）</span></span></div>
<div class="ln" style="top:703.2px">22</div>
<div class="cl" style="top:703.2px">        printl<span class="b3">(</span><span class="s">"1. <span class="z">截取验证码区域</span>..."</span><span class="b3">)</span>;</div>
<div class="ln" style="top:736.5px">23</div>
<div class="cl" style="top:736.5px">        <span class="k">var</span> screenWidth = screen.getScreenWidth<span class="b3">()</span>;</div>
<div class="ln" style="top:769.8px">24</div>
<div class="cl" style="top:769.8px">        <span class="k">var</span> screenHeight = screen.getScreenHeight<span class="b3">()</span>;</div>
<div class="ln" style="top:803.0px">25</div>
<div class="ln" style="top:836.2px">26</div>
<div class="cl" style="top:836.2px">        <span class="c">// <span class="z">假设验证码在屏幕右上角区域</span> (30%-50% width, 10%-20% height)</span></div>
<div class="ln" style="top:869.5px">27</div>
<div class="cl" style="top:869.5px">        <span class="k">var</span> captchaImage = screen.screenShot<span class="b3">(</span></div>
<div class="ln" style="top:902.8px">28</div>
<div class="cl" style="top:902.8px">            <span class="m">Math</span>.floor<span class="b1">(</span>screenWidth * <span class="n">0.2</span><span class="b1">)</span>,</div>
<div class="ln" style="top:936.0px">29</div>
<div class="cl" style="top:936.0px">            <span class="m">Math</span>.floor<span class="b1">(</span>screenHeight * <span class="n">0.1</span><span class="b1">)</span>,</div>
<div class="ln" style="top:969.2px">30</div>
<div class="cl" style="top:969.2px">            <span class="n">80</span></div>
<div class="ln" style="top:1002.5px">31</div>
<div class="cl" style="top:1002.5px">        <span class="b3">)</span>;</div>
<div class="ln" style="top:1035.8px">32</div>
<div class="cl" style="top:1035.8px">        printl<span class="b3">(</span><span class="s">"<span class="gp"> </span><span class="z">验证码截图完成</span>"</span><span class="b3">)</span>;</div>
<div class="ln" style="top:1069.0px">33</div>
<div class="ln" style="top:1102.2px">34</div>
<div class="cl" style="top:1102.2px">        <span class="c">// 2. OCR<span class="z">识别验证码</span></span></div>
<div class="ln" style="top:1135.5px">35</div>
<div class="cl" style="top:1135.5px">        printl<span class="b3">(</span><span class="s">"2. OCR<span class="z">识别验证码</span>..."</span><span class="b3">)</span>;</div>
<div class="ln" style="top:1168.8px">36</div>
<div class="cl" style="top:1168.8px">        <span class="k">var</span> ocrResult = captchaImage.ocr<span class="b3">(</span><span class="n">0</span>, <span class="n">0</span>, <span class="n">1</span>, <span class="n">1</span><span class="b3">)</span>;</div>
<div class="ln" style="top:1202.0px">37</div>
<div class="cl" style="top:1202.0px">        <span class="k">var</span> captchaText = ocrResult.getAllString<span class="b3">()</span>;</div>
<div class="ln" style="top:1235.2px">38</div>
<div class="cl" style="top:1235.2px">        printl<span class="b3">(</span><span class="s">"<span class="gp"> </span><span class="z">识别结果</span>: "</span> + captchaText<span class="b3">)</span>;</div>
<div class="ln" style="top:1268.5px">39</div>
<div class="cl" style="top:1268.5px">        </div>
<svg width="2191" height="860" style="left:0;top:0;opacity:.62" viewBox="0 0 2191 860"><rect x="2054.0" y="4.0" width="24.0" height="1.3" fill="#4e7a44"/><rect x="2054.0" y="8.0" width="2.0" height="1.3" fill="#4e7a44"/><rect x="2054.0" y="10.0" width="46.0" height="1.3" fill="#4e7a44"/><rect x="2054.0" y="12.0" width="22.0" height="1.3" fill="#4e7a44"/><rect x="2054.0" y="14.0" width="2.0" height="1.3" fill="#4e7a44"/><rect x="2054.0" y="18.0" width="22.0" height="1.3" fill="#4e7a44"/><rect x="2054.0" y="22.0" width="44.0" height="1.3" fill="#4e7a44"/><rect x="2054.0" y="24.0" width="78.0" height="1.3" fill="#4e7a44"/><rect x="2054.0" y="28.0" width="3.0" height="1.3" fill="#4e7a44"/><rect x="2055.0" y="30.0" width="30.0" height="1.3" fill="#4e7a44"/><rect x="2055.0" y="32.0" width="58.0" height="1.3" fill="#4e7a44"/><rect x="2055.0" y="34.0" width="2.0" height="1.3" fill="#4e7a44"/><rect x="2054.0" y="36.0" width="8.0" height="1.3" fill="#456f96"/><rect x="2063.0" y="36.0" width="23.0" height="1.3" fill="#8c8c8c"/><rect x="2058.0" y="38.0" width="7.0" height="1.3" fill="#8c8c8c"/><rect x="2065.0" y="38.0" width="16.0" height="1.3" fill="#8f6a58"/><rect x="2058.0" y="42.0" width="3.0" height="1.3" fill="#456f96"/><rect x="2062.0" y="44.0" width="21.0" height="1.3" fill="#4e7a44"/><rect x="2066.0" y="46.0" width="4.0" height="1.3" fill="#3e8f80"/><rect x="2070.0" y="46.0" width="17.0" height="1.3" fill="#8c8c8c"/><rect x="2062.0" y="48.0" width="3.0" height="1.3" fill="#456f96"/><rect x="2066.0" y="48.0" width="10.0" height="1.3" fill="#8c8c8c"/><rect x="2077.0" y="48.0" width="42.0" height="1.3" fill="#8c8c8c"/><rect x="2062.0" y="52.0" width="31.0" height="1.3" fill="#4e7a44"/><rect x="2062.0" y="54.0" width="7.0" height="1.3" fill="#8c8c8c"/><rect x="2069.0" y="54.0" width="25.0" height="1.3" fill="#8f6a58"/><rect x="2062.0" y="56.0" width="7.0" height="1.3" fill="#8c8c8c"/><rect x="2069.0" y="56.0" width="14.0" height="1.3" fill="#8f6a58"/><rect x="2062.0" y="60.0" width="45.0" height="1.3" fill="#4e7a44"/><rect x="2066.0" y="62.0" width="4.0" height="1.3" fill="#3e8f80"/><rect x="2070.0" y="62.0" width="17.0" height="1.3" fill="#8c8c8c"/><rect x="2066.0" y="64.0" width="24.0" height="1.3" fill="#8c8c8c"/><rect x="2062.0" y="68.0" width="21.0" height="1.3" fill="#4e7a44"/><rect x="2062.0" y="70.0" width="3.0" height="1.3" fill="#456f96"/><rect x="2066.0" y="70.0" width="10.0" height="1.3" fill="#8c8c8c"/><rect x="2077.0" y="70.0" width="24.0" height="1.3" fill="#8c8c8c"/><rect x="2062.0" y="72.0" width="7.0" height="1.3" fill="#8c8c8c"/><rect x="2069.0" y="72.0" width="39.0" height="1.3" fill="#8f6a58"/><rect x="2062.0" y="74.0" width="7.0" height="1.3" fill="#8c8c8c"/><rect x="2069.0" y="74.0" width="25.0" height="1.3" fill="#8f6a58"/><rect x="2062.0" y="76.0" width="7.0" height="1.3" fill="#8c8c8c"/><rect x="2069.0" y="76.0" width="15.0" height="1.3" fill="#8f6a58"/><rect x="2062.0" y="78.0" width="3.0" height="1.3" fill="#456f96"/><rect x="2066.0" y="78.0" width="18.0" height="1.3" fill="#8c8c8c"/><rect x="2085.0" y="78.0" width="21.0" height="1.3" fill="#8c8c8c"/><rect x="2062.0" y="80.0" width="7.0" height="1.3" fill="#8c8c8c"/><rect x="2069.0" y="80.0" width="30.0" height="1.3" fill="#8f6a58"/><rect x="2062.0" y="84.0" width="30.0" height="1.3" fill="#4e7a44"/><rect x="2062.0" y="86.0" width="7.0" height="1.3" fill="#8c8c8c"/><rect x="2069.0" y="86.0" width="34.0" height="1.3" fill="#8f6a58"/><rect x="2062.0" y="88.0" width="7.0" height="1.3" fill="#8c8c8c"/><rect x="2069.0" y="88.0" width="13.0" height="1.3" fill="#8f6a58"/><rect x="2062.0" y="90.0" width="3.0" height="1.3" fill="#456f96"/><rect x="2066.0" y="90.0" width="17.0" height="1.3" fill="#8c8c8c"/><rect x="2084.0" y="90.0" width="44.0" height="1.3" fill="#8c8c8c"/><rect x="2062.0" y="92.0" width="3.0" height="1.3" fill="#456f96"/><rect x="2066.0" y="92.0" width="15.0" height="1.3" fill="#8c8c8c"/><rect x="2082.0" y="92.0" width="39.0" height="1.3" fill="#8c8c8c"/><rect x="2062.0" y="96.0" width="47.0" height="1.3" fill="#4e7a44"/><rect x="2062.0" y="98.0" width="7.0" height="1.3" fill="#8c8c8c"/><rect x="2069.0" y="98.0" width="37.0" height="1.3" fill="#8f6a58"/><rect x="2062.0" y="100.0" width="7.0" height="1.3" fill="#8c8c8c"/><rect x="2069.0" y="100.0" width="36.0" height="1.3" fill="#8f6a58"/><rect x="2062.0" y="102.0" width="7.0" height="1.3" fill="#8c8c8c"/><rect x="2069.0" y="102.0" width="30.0" height="1.3" fill="#8f6a58"/><rect x="2062.0" y="104.0" width="7.0" height="1.3" fill="#8c8c8c"/><rect x="2069.0" y="104.0" width="27.0" height="1.3" fill="#8f6a58"/><rect x="2062.0" y="108.0" width="39.0" height="1.3" fill="#4e7a44"/><rect x="2062.0" y="110.0" width="7.0" height="1.3" fill="#8c8c8c"/><rect x="2069.0" y="110.0" width="14.0" height="1.3" fill="#8f6a58"/><rect x="2062.0" y="112.0" width="7.0" height="1.3" fill="#8c8c8c"/><rect x="2069.0" y="112.0" width="25.0" height="1.3" fill="#8f6a58"/><rect x="2062.0" y="114.0" width="7.0" height="1.3" fill="#8c8c8c"/><rect x="2069.0" y="114.0" width="22.0" height="1.3" fill="#8f6a58"/><rect x="2062.0" y="116.0" width="7.0" height="1.3" fill="#8c8c8c"/><rect x="2069.0" y="116.0" width="27.0" height="1.3" fill="#8f6a58"/><rect x="2062.0" y="118.0" width="3.0" height="1.3" fill="#456f96"/><rect x="2066.0" y="118.0" width="11.0" height="1.3" fill="#8c8c8c"/><rect x="2078.0" y="118.0" width="30.0" height="1.3" fill="#8c8c8c"/><rect x="2062.0" y="122.0" width="39.0" height="1.3" fill="#4e7a44"/><rect x="2062.0" y="124.0" width="3.0" height="1.3" fill="#456f96"/><rect x="2066.0" y="124.0" width="17.0" height="1.3" fill="#8c8c8c"/><rect x="2084.0" y="124.0" width="14.0" height="1.3" fill="#8c8c8c"/><rect x="2066.0" y="126.0" width="4.0" height="1.3" fill="#3e8f80"/><rect x="2070.0" y="126.0" width="22.0" height="1.3" fill="#8c8c8c"/><rect x="2062.0" y="128.0" width="3.0" height="1.3" fill="#456f96"/><rect x="2066.0" y="128.0" width="11.0" height="1.3" fill="#8c8c8c"/><rect x="2078.0" y="128.0" width="13.0" height="1.3" fill="#8c8c8c"/><rect x="2062.0" y="130.0" width="3.0" height="1.3" fill="#456f96"/><rect x="2066.0" y="130.0" width="14.0" height="1.3" fill="#8c8c8c"/><rect x="2081.0" y="130.0" width="38.0" height="1.3" fill="#8c8c8c"/><rect x="2062.0" y="134.0" width="36.0" height="1.3" fill="#4e7a44"/><rect x="2066.0" y="136.0" width="15.0" height="1.3" fill="#8c8c8c"/><rect x="2062.0" y="138.0" width="7.0" height="1.3" fill="#8c8c8c"/><rect x="2069.0" y="138.0" width="26.0" height="1.3" fill="#8f6a58"/><rect x="2062.0" y="140.0" width="3.0" height="1.3" fill="#456f96"/><rect x="2066.0" y="140.0" width="11.0" height="1.3" fill="#8c8c8c"/><rect x="2078.0" y="140.0" width="41.0" height="1.3" fill="#8c8c8c"/><rect x="2062.0" y="142.0" width="7.0" height="1.3" fill="#8c8c8c"/><rect x="2069.0" y="142.0" width="36.0" height="1.3" fill="#8f6a58"/><rect x="2062.0" y="144.0" width="7.0" height="1.3" fill="#8c8c8c"/><rect x="2069.0" y="144.0" width="35.0" height="1.3" fill="#8f6a58"/><rect x="2058.0" y="148.0" width="1.0" height="1.3" fill="#8c8c8c"/><rect x="2060.0" y="148.0" width="5.0" height="1.3" fill="#456f96"/><rect x="2066.0" y="148.0" width="4.0" height="1.3" fill="#8c8c8c"/><rect x="2062.0" y="150.0" width="7.0" height="1.3" fill="#8c8c8c"/><rect x="2069.0" y="150.0" width="15.0" height="1.3" fill="#8f6a58"/><rect x="2058.0" y="152.0" width="1.0" height="1.3" fill="#8c8c8c"/><rect x="2054.0" y="154.0" width="1.0" height="1.3" fill="#8c8c8c"/><rect x="2054.0" y="158.0" width="3.0" height="1.3" fill="#4e7a44"/><rect x="2055.0" y="160.0" width="30.0" height="1.3" fill="#4e7a44"/><rect x="2055.0" y="162.0" width="55.0" height="1.3" fill="#4e7a44"/><rect x="2055.0" y="164.0" width="2.0" height="1.3" fill="#4e7a44"/><rect x="2054.0" y="166.0" width="8.0" height="1.3" fill="#456f96"/><rect x="2063.0" y="166.0" width="25.0" height="1.3" fill="#8c8c8c"/><rect x="2058.0" y="168.0" width="7.0" height="1.3" fill="#8c8c8c"/><rect x="2065.0" y="168.0" width="15.0" height="1.3" fill="#8f6a58"/><rect x="2058.0" y="172.0" width="3.0" height="1.3" fill="#456f96"/><rect x="2062.0" y="174.0" width="46.0" height="1.3" fill="#4e7a44"/><rect x="2062.0" y="176.0" width="3.0" height="1.3" fill="#456f96"/><rect x="2066.0" y="176.0" width="12.0" height="1.3" fill="#8c8c8c"/><rect x="2079.0" y="176.0" width="37.0" height="1.3" fill="#8c8c8c"/><rect x="2066.0" y="178.0" width="12.0" height="1.3" fill="#8c8c8c"/><rect x="2062.0" y="180.0" width="3.0" height="1.3" fill="#456f96"/><rect x="2066.0" y="180.0" width="15.0" height="1.3" fill="#8c8c8c"/><rect x="2082.0" y="180.0" width="34.0" height="1.3" fill="#8c8c8c"/><rect x="2066.0" y="182.0" width="8.0" height="1.3" fill="#8c8c8c"/><rect x="2062.0" y="184.0" width="7.0" height="1.3" fill="#8c8c8c"/><rect x="2069.0" y="184.0" width="16.0" height="1.3" fill="#8f6a58"/><rect x="2062.0" y="188.0" width="32.0" height="1.3" fill="#4e7a44"/><rect x="2062.0" y="190.0" width="7.0" height="1.3" fill="#8c8c8c"/><rect x="2069.0" y="190.0" width="38.0" height="1.3" fill="#8f6a58"/><rect x="2062.0" y="192.0" width="3.0" height="1.3" fill="#456f96"/><rect x="2066.0" y="192.0" width="14.0" height="1.3" fill="#8c8c8c"/><rect x="2081.0" y="192.0" width="28.0" height="1.3" fill="#8c8c8c"/><rect x="2062.0" y="194.0" width="7.0" height="1.3" fill="#8c8c8c"/><rect x="2069.0" y="194.0" width="25.0" height="1.3" fill="#8f6a58"/><rect x="2062.0" y="198.0" width="52.0" height="1.3" fill="#4e7a44"/><rect x="2062.0" y="200.0" width="3.0" height="1.3" fill="#456f96"/><rect x="2066.0" y="200.0" width="15.0" height="1.3" fill="#8c8c8c"/><rect x="2082.0" y="200.0" width="18.0" height="1.3" fill="#8c8c8c"/><rect x="2062.0" y="202.0" width="3.0" height="1.3" fill="#456f96"/><rect x="2066.0" y="202.0" width="18.0" height="1.3" fill="#8c8c8c"/><rect x="2085.0" y="202.0" width="13.0" height="1.3" fill="#8c8c8c"/><rect x="2062.0" y="204.0" width="3.0" height="1.3" fill="#456f96"/><rect x="2066.0" y="204.0" width="18.0" height="1.3" fill="#8c8c8c"/><rect x="2085.0" y="204.0" width="35.0" height="1.3" fill="#8c8c8c"/><rect x="2062.0" y="206.0" width="3.0" height="1.3" fill="#456f96"/><rect x="2066.0" y="206.0" width="16.0" height="1.3" fill="#8c8c8c"/><rect x="2083.0" y="206.0" width="16.0" height="1.3" fill="#8c8c8c"/><rect x="2062.0" y="210.0" width="48.0" height="1.3" fill="#4e7a44"/><rect x="2062.0" y="212.0" width="7.0" height="1.3" fill="#8c8c8c"/><rect x="2069.0" y="212.0" width="14.0" height="1.3" fill="#8f6a58"/><rect x="2066.0" y="214.0" width="18.0" height="1.3" fill="#8c8c8c"/><rect x="2062.0" y="216.0" width="7.0" height="1.3" fill="#8c8c8c"/><rect x="2069.0" y="216.0" width="22.0" height="1.3" fill="#8f6a58"/><rect x="2062.0" y="218.0" width="3.0" height="1.3" fill="#456f96"/><rect x="2066.0" y="218.0" width="11.0" height="1.3" fill="#8c8c8c"/><rect x="2078.0" y="218.0" width="10.0" height="1.3" fill="#8c8c8c"/><rect x="2062.0" y="220.0" width="3.0" height="1.3" fill="#456f96"/><rect x="2066.0" y="220.0" width="18.0" height="1.3" fill="#8c8c8c"/><rect x="2085.0" y="220.0" width="16.0" height="1.3" fill="#8c8c8c"/><rect x="2062.0" y="224.0" width="41.0" height="1.3" fill="#4e7a44"/><rect x="2062.0" y="226.0" width="7.0" height="1.3" fill="#8c8c8c"/><rect x="2069.0" y="226.0" width="39.0" height="1.3" fill="#8f6a58"/><rect x="2062.0" y="228.0" width="7.0" height="1.3" fill="#8c8c8c"/><rect x="2069.0" y="228.0" width="24.0" height="1.3" fill="#8f6a58"/><rect x="2062.0" y="230.0" width="7.0" height="1.3" fill="#8c8c8c"/><rect x="2069.0" y="230.0" width="20.0" height="1.3" fill="#8f6a58"/><rect x="2066.0" y="232.0" width="23.0" height="1.3" fill="#8c8c8c"/><rect x="2062.0" y="234.0" width="3.0" height="1.3" fill="#456f96"/><rect x="2066.0" y="234.0" width="11.0" height="1.3" fill="#8c8c8c"/><rect x="2078.0" y="234.0" width="17.0" height="1.3" fill="#8c8c8c"/><rect x="2066.0" y="236.0" width="4.0" height="1.3" fill="#3e8f80"/><rect x="2070.0" y="236.0" width="28.0" height="1.3" fill="#8c8c8c"/><rect x="2062.0" y="240.0" width="48.0" height="1.3" fill="#4e7a44"/><rect x="2062.0" y="242.0" width="7.0" height="1.3" fill="#8c8c8c"/><rect x="2069.0" y="242.0" width="16.0" height="1.3" fill="#8f6a58"/><rect x="2062.0" y="244.0" width="7.0" height="1.3" fill="#8c8c8c"/><rect x="2069.0" y="244.0" width="22.0" height="1.3" fill="#8f6a58"/><rect x="2062.0" y="246.0" width="3.0" height="1.3" fill="#456f96"/><rect x="2066.0" y="246.0" width="17.0" height="1.3" fill="#8c8c8c"/><rect x="2084.0" y="246.0" width="20.0" height="1.3" fill="#8c8c8c"/><rect x="2062.0" y="248.0" width="3.0" height="1.3" fill="#456f96"/><rect x="2066.0" y="248.0" width="13.0" height="1.3" fill="#8c8c8c"/><rect x="2080.0" y="248.0" width="43.0" height="1.3" fill="#8c8c8c"/><rect x="2062.0" y="250.0" width="3.0" height="1.3" fill="#456f96"/><rect x="2066.0" y="250.0" width="18.0" height="1.3" fill="#8c8c8c"/><rect x="2085.0" y="250.0" width="11.0" height="1.3" fill="#8c8c8c"/><rect x="2062.0" y="254.0" width="51.0" height="1.3" fill="#4e7a44"/><rect x="2066.0" y="256.0" width="6.0" height="1.3" fill="#8c8c8c"/><rect x="2062.0" y="258.0" width="3.0" height="1.3" fill="#456f96"/><rect x="2066.0" y="258.0" width="14.0" height="1.3" fill="#8c8c8c"/><rect x="2081.0" y="258.0" width="43.0" height="1.3" fill="#8c8c8c"/><rect x="2062.0" y="260.0" width="3.0" height="1.3" fill="#456f96"/><rect x="2066.0" y="260.0" width="12.0" height="1.3" fill="#8c8c8c"/><rect x="2079.0" y="260.0" width="32.0" height="1.3" fill="#8c8c8c"/><rect x="2062.0" y="262.0" width="4.0" height="1.3" fill="#3e8f80"/><rect x="2066.0" y="262.0" width="30.0" height="1.3" fill="#8c8c8c"/><rect x="2058.0" y="266.0" width="1.0" height="1.3" fill="#8c8c8c"/><rect x="2060.0" y="266.0" width="5.0" height="1.3" fill="#456f96"/><rect x="2066.0" y="266.0" width="4.0" height="1.3" fill="#8c8c8c"/><rect x="2062.0" y="268.0" width="7.0" height="1.3" fill="#8c8c8c"/><rect x="2069.0" y="268.0" width="17.0" height="1.3" fill="#8f6a58"/><rect x="2058.0" y="270.0" width="1.0" height="1.3" fill="#8c8c8c"/><rect x="2054.0" y="272.0" width="1.0" height="1.3" fill="#8c8c8c"/><rect x="2054.0" y="276.0" width="3.0" height="1.3" fill="#4e7a44"/><rect x="2055.0" y="278.0" width="25.0" height="1.3" fill="#4e7a44"/><rect x="2055.0" y="280.0" width="42.0" height="1.3" fill="#4e7a44"/><rect x="2055.0" y="282.0" width="2.0" height="1.3" fill="#4e7a44"/><rect x="2054.0" y="284.0" width="8.0" height="1.3" fill="#456f96"/><rect x="2063.0" y="284.0" width="30.0" height="1.3" fill="#8c8c8c"/><rect x="2058.0" y="286.0" width="7.0" height="1.3" fill="#8c8c8c"/><rect x="2065.0" y="286.0" width="17.0" height="1.3" fill="#8f6a58"/><rect x="2058.0" y="290.0" width="3.0" height="1.3" fill="#456f96"/><rect x="2062.0" y="292.0" width="32.0" height="1.3" fill="#4e7a44"/><rect x="2062.0" y="294.0" width="3.0" height="1.3" fill="#456f96"/><rect x="2066.0" y="294.0" width="15.0" height="1.3" fill="#8c8c8c"/><rect x="2082.0" y="294.0" width="11.0" height="1.3" fill="#8c8c8c"/><rect x="2066.0" y="296.0" width="29.0" height="1.3" fill="#8c8c8c"/><rect x="2062.0" y="298.0" width="7.0" height="1.3" fill="#8c8c8c"/><rect x="2069.0" y="298.0" width="20.0" height="1.3" fill="#8f6a58"/><rect x="2062.0" y="302.0" width="30.0" height="1.3" fill="#4e7a44"/><rect x="2066.0" y="304.0" width="18.0" height="1.3" fill="#8c8c8c"/><rect x="2066.0" y="306.0" width="4.0" height="1.3" fill="#3e8f80"/><rect x="2070.0" y="306.0" width="25.0" height="1.3" fill="#8c8c8c"/><rect x="2066.0" y="308.0" width="15.0" height="1.3" fill="#8c8c8c"/><rect x="2062.0" y="310.0" width="7.0" height="1.3" fill="#8c8c8c"/><rect x="2069.0" y="310.0" width="15.0" height="1.3" fill="#8f6a58"/><rect x="2062.0" y="312.0" width="7.0" height="1.3" fill="#8c8c8c"/><rect x="2069.0" y="312.0" width="18.0" height="1.3" fill="#8f6a58"/><rect x="2062.0" y="314.0" width="7.0" height="1.3" fill="#8c8c8c"/><rect x="2069.0" y="314.0" width="27.0" height="1.3" fill="#8f6a58"/><rect x="2062.0" y="318.0" width="18.0" height="1.3" fill="#4e7a44"/><rect x="2066.0" y="320.0" width="15.0" height="1.3" fill="#8c8c8c"/><rect x="2062.0" y="322.0" width="4.0" height="1.3" fill="#3e8f80"/><rect x="2066.0" y="322.0" width="16.0" height="1.3" fill="#8c8c8c"/><rect x="2066.0" y="324.0" width="4.0" height="1.3" fill="#3e8f80"/><rect x="2070.0" y="324.0" width="17.0" height="1.3" fill="#8c8c8c"/><rect x="2066.0" y="326.0" width="29.0" height="1.3" fill="#8c8c8c"/><rect x="2062.0" y="328.0" width="3.0" height="1.3" fill="#456f96"/><rect x="2066.0" y="328.0" width="13.0" height="1.3" fill="#8c8c8c"/><rect x="2080.0" y="328.0" width="40.0" height="1.3" fill="#8c8c8c"/><rect x="2062.0" y="332.0" width="29.0" height="1.3" fill="#4e7a44"/><rect x="2062.0" y="334.0" width="4.0" height="1.3" fill="#3e8f80"/><rect x="2066.0" y="334.0" width="24.0" height="1.3" fill="#8c8c8c"/><rect x="2062.0" y="336.0" width="7.0" height="1.3" fill="#8c8c8c"/><rect x="2069.0" y="336.0" width="35.0" height="1.3" fill="#8f6a58"/><rect x="2062.0" y="338.0" width="3.0" height="1.3" fill="#456f96"/><rect x="2066.0" y="338.0" width="16.0" height="1.3" fill="#8c8c8c"/><rect x="2083.0" y="338.0" width="15.0" height="1.3" fill="#8c8c8c"/><rect x="2062.0" y="340.0" width="3.0" height="1.3" fill="#456f96"/><rect x="2066.0" y="340.0" width="12.0" height="1.3" fill="#8c8c8c"/><rect x="2079.0" y="340.0" width="18.0" height="1.3" fill="#8c8c8c"/><rect x="2062.0" y="342.0" width="7.0" height="1.3" fill="#8c8c8c"/><rect x="2069.0" y="342.0" width="30.0" height="1.3" fill="#8f6a58"/><rect x="2062.0" y="346.0" width="47.0" height="1.3" fill="#4e7a44"/><rect x="2062.0" y="348.0" width="3.0" height="1.3" fill="#456f96"/><rect x="2066.0" y="348.0" width="17.0" height="1.3" fill="#8c8c8c"/><rect x="2084.0" y="348.0" width="32.0" height="1.3" fill="#8c8c8c"/><rect x="2062.0" y="350.0" width="7.0" height="1.3" fill="#8c8c8c"/><rect x="2069.0" y="350.0" width="29.0" height="1.3" fill="#8f6a58"/><rect x="2062.0" y="352.0" width="7.0" height="1.3" fill="#8c8c8c"/><rect x="2069.0" y="352.0" width="12.0" height="1.3" fill="#8f6a58"/><rect x="2062.0" y="356.0" width="24.0" height="1.3" fill="#4e7a44"/><rect x="2062.0" y="358.0" width="3.0" height="1.3" fill="#456f96"/><rect x="2066.0" y="358.0" width="12.0" height="1.3" fill="#8c8c8c"/><rect x="2079.0" y="358.0" width="37.0" height="1.3" fill="#8c8c8c"/><rect x="2066.0" y="360.0" width="10.0" height="1.3" fill="#8c8c8c"/><rect x="2066.0" y="362.0" width="4.0" height="1.3" fill="#3e8f80"/><rect x="2070.0" y="362.0" width="20.0" height="1.3" fill="#8c8c8c"/><rect x="2062.0" y="364.0" width="7.0" height="1.3" fill="#8c8c8c"/><rect x="2069.0" y="364.0" width="18.0" height="1.3" fill="#8f6a58"/><rect x="2062.0" y="366.0" width="7.0" height="1.3" fill="#8c8c8c"/><rect x="2069.0" y="366.0" width="19.0" height="1.3" fill="#8f6a58"/><rect x="2062.0" y="368.0" width="4.0" height="1.3" fill="#3e8f80"/><rect x="2066.0" y="368.0" width="24.0" height="1.3" fill="#8c8c8c"/><rect x="2062.0" y="372.0" width="34.0" height="1.3" fill="#4e7a44"/><rect x="2062.0" y="374.0" width="3.0" height="1.3" fill="#456f96"/><rect x="2066.0" y="374.0" width="12.0" height="1.3" fill="#8c8c8c"/><rect x="2079.0" y="374.0" width="13.0" height="1.3" fill="#8c8c8c"/><rect x="2066.0" y="376.0" width="15.0" height="1.3" fill="#8c8c8c"/><rect x="2066.0" y="378.0" width="25.0" height="1.3" fill="#8c8c8c"/><rect x="2062.0" y="380.0" width="3.0" height="1.3" fill="#456f96"/><rect x="2066.0" y="380.0" width="18.0" height="1.3" fill="#8c8c8c"/><rect x="2085.0" y="380.0" width="36.0" height="1.3" fill="#8c8c8c"/><rect x="2066.0" y="382.0" width="4.0" height="1.3" fill="#3e8f80"/><rect x="2070.0" y="382.0" width="30.0" height="1.3" fill="#8c8c8c"/><rect x="2062.0" y="384.0" width="7.0" height="1.3" fill="#8c8c8c"/><rect x="2069.0" y="384.0" width="16.0" height="1.3" fill="#8f6a58"/><rect x="2062.0" y="388.0" width="51.0" height="1.3" fill="#4e7a44"/><rect x="2062.0" y="390.0" width="7.0" height="1.3" fill="#8c8c8c"/><rect x="2069.0" y="390.0" width="26.0" height="1.3" fill="#8f6a58"/><rect x="2062.0" y="392.0" width="4.0" height="1.3" fill="#3e8f80"/><rect x="2066.0" y="392.0" width="14.0" height="1.3" fill="#8c8c8c"/><rect x="2062.0" y="394.0" width="4.0" height="1.3" fill="#3e8f80"/><rect x="2066.0" y="394.0" width="18.0" height="1.3" fill="#8c8c8c"/><rect x="2062.0" y="396.0" width="7.0" height="1.3" fill="#8c8c8c"/><rect x="2069.0" y="396.0" width="27.0" height="1.3" fill="#8f6a58"/><rect x="2062.0" y="398.0" width="3.0" height="1.3" fill="#456f96"/><rect x="2066.0" y="398.0" width="11.0" height="1.3" fill="#8c8c8c"/><rect x="2078.0" y="398.0" width="13.0" height="1.3" fill="#8c8c8c"/><rect x="2062.0" y="400.0" width="7.0" height="1.3" fill="#8c8c8c"/><rect x="2069.0" y="400.0" width="28.0" height="1.3" fill="#8f6a58"/><rect x="2062.0" y="404.0" width="51.0" height="1.3" fill="#4e7a44"/><rect x="2062.0" y="406.0" width="3.0" height="1.3" fill="#456f96"/><rect x="2066.0" y="406.0" width="11.0" height="1.3" fill="#8c8c8c"/><rect x="2078.0" y="406.0" width="13.0" height="1.3" fill="#8c8c8c"/><rect x="2062.0" y="408.0" width="7.0" height="1.3" fill="#8c8c8c"/><rect x="2069.0" y="408.0" width="20.0" height="1.3" fill="#8f6a58"/><rect x="2062.0" y="410.0" width="7.0" height="1.3" fill="#8c8c8c"/><rect x="2069.0" y="410.0" width="15.0" height="1.3" fill="#8f6a58"/><rect x="2062.0" y="412.0" width="3.0" height="1.3" fill="#456f96"/><rect x="2066.0" y="412.0" width="18.0" height="1.3" fill="#8c8c8c"/><rect x="2085.0" y="412.0" width="11.0" height="1.3" fill="#8c8c8c"/><rect x="2062.0" y="414.0" width="4.0" height="1.3" fill="#3e8f80"/><rect x="2066.0" y="414.0" width="16.0" height="1.3" fill="#8c8c8c"/><rect x="2062.0" y="416.0" width="3.0" height="1.3" fill="#456f96"/><rect x="2066.0" y="416.0" width="18.0" height="1.3" fill="#8c8c8c"/><rect x="2085.0" y="416.0" width="42.0" height="1.3" fill="#8c8c8c"/><rect x="2058.0" y="420.0" width="1.0" height="1.3" fill="#8c8c8c"/><rect x="2060.0" y="420.0" width="5.0" height="1.3" fill="#456f96"/><rect x="2066.0" y="420.0" width="4.0" height="1.3" fill="#8c8c8c"/><rect x="2062.0" y="422.0" width="7.0" height="1.3" fill="#8c8c8c"/><rect x="2069.0" y="422.0" width="15.0" height="1.3" fill="#8f6a58"/><rect x="2058.0" y="424.0" width="1.0" height="1.3" fill="#8c8c8c"/><rect x="2054.0" y="426.0" width="1.0" height="1.3" fill="#8c8c8c"/><rect x="2054.0" y="430.0" width="3.0" height="1.3" fill="#4e7a44"/><rect x="2055.0" y="432.0" width="26.0" height="1.3" fill="#4e7a44"/><rect x="2055.0" y="434.0" width="58.0" height="1.3" fill="#4e7a44"/><rect x="2055.0" y="436.0" width="2.0" height="1.3" fill="#4e7a44"/><rect x="2054.0" y="438.0" width="8.0" height="1.3" fill="#456f96"/><rect x="2063.0" y="438.0" width="26.0" height="1.3" fill="#8c8c8c"/><rect x="2058.0" y="440.0" width="7.0" height="1.3" fill="#8c8c8c"/><rect x="2065.0" y="440.0" width="22.0" height="1.3" fill="#8f6a58"/><rect x="2058.0" y="444.0" width="3.0" height="1.3" fill="#456f96"/><rect x="2062.0" y="446.0" width="50.0" height="1.3" fill="#4e7a44"/><rect x="2062.0" y="448.0" width="3.0" height="1.3" fill="#456f96"/><rect x="2066.0" y="448.0" width="14.0" height="1.3" fill="#8c8c8c"/><rect x="2081.0" y="448.0" width="22.0" height="1.3" fill="#8c8c8c"/><rect x="2066.0" y="450.0" width="4.0" height="1.3" fill="#3e8f80"/><rect x="2070.0" y="450.0" width="18.0" height="1.3" fill="#8c8c8c"/><rect x="2062.0" y="452.0" width="3.0" height="1.3" fill="#456f96"/><rect x="2066.0" y="452.0" width="16.0" height="1.3" fill="#8c8c8c"/><rect x="2083.0" y="452.0" width="38.0" height="1.3" fill="#8c8c8c"/><rect x="2062.0" y="456.0" width="38.0" height="1.3" fill="#4e7a44"/><rect x="2062.0" y="458.0" width="3.0" height="1.3" fill="#456f96"/><rect x="2066.0" y="458.0" width="16.0" height="1.3" fill="#8c8c8c"/><rect x="2083.0" y="458.0" width="14.0" height="1.3" fill="#8c8c8c"/><rect x="2062.0" y="460.0" width="7.0" height="1.3" fill="#8c8c8c"/><rect x="2069.0" y="460.0" width="21.0" height="1.3" fill="#8f6a58"/><rect x="2062.0" y="464.0" width="25.0" height="1.3" fill="#4e7a44"/><rect x="2066.0" y="466.0" width="24.0" height="1.3" fill="#8c8c8c"/><rect x="2062.0" y="468.0" width="3.0" height="1.3" fill="#456f96"/><rect x="2066.0" y="468.0" width="12.0" height="1.3" fill="#8c8c8c"/><rect x="2079.0" y="468.0" width="26.0" height="1.3" fill="#8c8c8c"/><rect x="2066.0" y="470.0" width="18.0" height="1.3" fill="#8c8c8c"/><rect x="2062.0" y="474.0" width="32.0" height="1.3" fill="#4e7a44"/><rect x="2062.0" y="476.0" width="3.0" height="1.3" fill="#456f96"/><rect x="2066.0" y="476.0" width="17.0" height="1.3" fill="#8c8c8c"/><rect x="2084.0" y="476.0" width="20.0" height="1.3" fill="#8c8c8c"/><rect x="2066.0" y="478.0" width="30.0" height="1.3" fill="#8c8c8c"/><rect x="2062.0" y="482.0" width="32.0" height="1.3" fill="#4e7a44"/><rect x="2062.0" y="484.0" width="3.0" height="1.3" fill="#456f96"/><rect x="2066.0" y="484.0" width="18.0" height="1.3" fill="#8c8c8c"/><rect x="2085.0" y="484.0" width="35.0" height="1.3" fill="#8c8c8c"/><rect x="2062.0" y="486.0" width="7.0" height="1.3" fill="#8c8c8c"/><rect x="2069.0" y="486.0" width="18.0" height="1.3" fill="#8f6a58"/><rect x="2062.0" y="488.0" width="3.0" height="1.3" fill="#456f96"/><rect x="2066.0" y="488.0" width="11.0" height="1.3" fill="#8c8c8c"/><rect x="2078.0" y="488.0" width="33.0" height="1.3" fill="#8c8c8c"/><rect x="2062.0" y="492.0" width="19.0" height="1.3" fill="#4e7a44"/><rect x="2062.0" y="494.0" width="3.0" height="1.3" fill="#456f96"/><rect x="2066.0" y="494.0" width="17.0" height="1.3" fill="#8c8c8c"/><rect x="2084.0" y="494.0" width="11.0" height="1.3" fill="#8c8c8c"/><rect x="2062.0" y="496.0" width="3.0" height="1.3" fill="#456f96"/><rect x="2066.0" y="496.0" width="18.0" height="1.3" fill="#8c8c8c"/><rect x="2085.0" y="496.0" width="28.0" height="1.3" fill="#8c8c8c"/><rect x="2062.0" y="498.0" width="3.0" height="1.3" fill="#456f96"/><rect x="2066.0" y="498.0" width="11.0" height="1.3" fill="#8c8c8c"/><rect x="2078.0" y="498.0" width="17.0" height="1.3" fill="#8c8c8c"/><rect x="2066.0" y="500.0" width="29.0" height="1.3" fill="#8c8c8c"/><rect x="2062.0" y="504.0" width="32.0" height="1.3" fill="#4e7a44"/><rect x="2062.0" y="506.0" width="7.0" height="1.3" fill="#8c8c8c"/><rect x="2069.0" y="506.0" width="20.0" height="1.3" fill="#8f6a58"/><rect x="2062.0" y="508.0" width="7.0" height="1.3" fill="#8c8c8c"/><rect x="2069.0" y="508.0" width="36.0" height="1.3" fill="#8f6a58"/><rect x="2062.0" y="512.0" width="29.0" height="1.3" fill="#4e7a44"/><rect x="2062.0" y="514.0" width="4.0" height="1.3" fill="#3e8f80"/><rect x="2066.0" y="514.0" width="27.0" height="1.3" fill="#8c8c8c"/><rect x="2066.0" y="516.0" width="4.0" height="1.3" fill="#3e8f80"/><rect x="2070.0" y="516.0" width="22.0" height="1.3" fill="#8c8c8c"/><rect x="2062.0" y="518.0" width="3.0" height="1.3" fill="#456f96"/><rect x="2066.0" y="518.0" width="18.0" height="1.3" fill="#8c8c8c"/><rect x="2085.0" y="518.0" width="42.0" height="1.3" fill="#8c8c8c"/><rect x="2062.0" y="520.0" width="3.0" height="1.3" fill="#456f96"/><rect x="2066.0" y="520.0" width="15.0" height="1.3" fill="#8c8c8c"/><rect x="2082.0" y="520.0" width="15.0" height="1.3" fill="#8c8c8c"/><rect x="2062.0" y="524.0" width="35.0" height="1.3" fill="#4e7a44"/><rect x="2062.0" y="526.0" width="4.0" height="1.3" fill="#3e8f80"/><rect x="2066.0" y="526.0" width="19.0" height="1.3" fill="#8c8c8c"/><rect x="2062.0" y="528.0" width="3.0" height="1.3" fill="#456f96"/><rect x="2066.0" y="528.0" width="11.0" height="1.3" fill="#8c8c8c"/><rect x="2078.0" y="528.0" width="27.0" height="1.3" fill="#8c8c8c"/><rect x="2058.0" y="532.0" width="1.0" height="1.3" fill="#8c8c8c"/><rect x="2060.0" y="532.0" width="5.0" height="1.3" fill="#456f96"/><rect x="2066.0" y="532.0" width="4.0" height="1.3" fill="#8c8c8c"/><rect x="2062.0" y="534.0" width="7.0" height="1.3" fill="#8c8c8c"/><rect x="2069.0" y="534.0" width="12.0" height="1.3" fill="#8f6a58"/><rect x="2058.0" y="536.0" width="1.0" height="1.3" fill="#8c8c8c"/><rect x="2054.0" y="538.0" width="1.0" height="1.3" fill="#8c8c8c"/><rect x="2054.0" y="542.0" width="3.0" height="1.3" fill="#4e7a44"/><rect x="2055.0" y="544.0" width="20.0" height="1.3" fill="#4e7a44"/><rect x="2055.0" y="546.0" width="46.0" height="1.3" fill="#4e7a44"/><rect x="2055.0" y="548.0" width="2.0" height="1.3" fill="#4e7a44"/><rect x="2054.0" y="550.0" width="8.0" height="1.3" fill="#456f96"/><rect x="2063.0" y="550.0" width="19.0" height="1.3" fill="#8c8c8c"/><rect x="2058.0" y="552.0" width="7.0" height="1.3" fill="#8c8c8c"/><rect x="2065.0" y="552.0" width="23.0" height="1.3" fill="#8f6a58"/><rect x="2058.0" y="556.0" width="3.0" height="1.3" fill="#456f96"/><rect x="2062.0" y="558.0" width="22.0" height="1.3" fill="#4e7a44"/><rect x="2066.0" y="560.0" width="18.0" height="1.3" fill="#8c8c8c"/><rect x="2062.0" y="562.0" width="7.0" height="1.3" fill="#8c8c8c"/><rect x="2069.0" y="562.0" width="29.0" height="1.3" fill="#8f6a58"/><rect x="2062.0" y="564.0" width="3.0" height="1.3" fill="#456f96"/><rect x="2066.0" y="564.0" width="14.0" height="1.3" fill="#8c8c8c"/><rect x="2081.0" y="564.0" width="18.0" height="1.3" fill="#8c8c8c"/><rect x="2062.0" y="566.0" width="7.0" height="1.3" fill="#8c8c8c"/><rect x="2069.0" y="566.0" width="34.0" height="1.3" fill="#8f6a58"/><rect x="2062.0" y="570.0" width="33.0" height="1.3" fill="#4e7a44"/><rect x="2066.0" y="572.0" width="12.0" height="1.3" fill="#8c8c8c"/><rect x="2062.0" y="574.0" width="7.0" height="1.3" fill="#8c8c8c"/><rect x="2069.0" y="574.0" width="18.0" height="1.3" fill="#8f6a58"/><rect x="2062.0" y="578.0" width="37.0" height="1.3" fill="#4e7a44"/><rect x="2062.0" y="580.0" width="3.0" height="1.3" fill="#456f96"/><rect x="2066.0" y="580.0" width="13.0" height="1.3" fill="#8c8c8c"/><rect x="2080.0" y="580.0" width="28.0" height="1.3" fill="#8c8c8c"/><rect x="2062.0" y="582.0" width="3.0" height="1.3" fill="#456f96"/><rect x="2066.0" y="582.0" width="12.0" height="1.3" fill="#8c8c8c"/><rect x="2079.0" y="582.0" width="27.0" height="1.3" fill="#8c8c8c"/><rect x="2062.0" y="584.0" width="7.0" height="1.3" fill="#8c8c8c"/><rect x="2069.0" y="584.0" width="12.0" height="1.3" fill="#8f6a58"/><rect x="2066.0" y="586.0" width="5.0" height="1.3" fill="#8c8c8c"/><rect x="2062.0" y="590.0" width="18.0" height="1.3" fill="#4e7a44"/><rect x="2062.0" y="592.0" width="3.0" height="1.3" fill="#456f96"/><rect x="2066.0" y="592.0" width="18.0" height="1.3" fill="#8c8c8c"/><rect x="2085.0" y="592.0" width="22.0" height="1.3" fill="#8c8c8c"/><rect x="2062.0" y="594.0" width="3.0" height="1.3" fill="#456f96"/><rect x="2066.0" y="594.0" width="13.0" height="1.3" fill="#8c8c8c"/><rect x="2080.0" y="594.0" width="38.0" height="1.3" fill="#8c8c8c"/><rect x="2062.0" y="598.0" width="24.0" height="1.3" fill="#4e7a44"/><rect x="2062.0" y="600.0" width="3.0" height="1.3" fill="#456f96"/><rect x="2066.0" y="600.0" width="18.0" height="1.3" fill="#8c8c8c"/><rect x="2085.0" y="600.0" width="35.0" height="1.3" fill="#8c8c8c"/><rect x="2066.0" y="602.0" width="13.0" height="1.3" fill="#8c8c8c"/><rect x="2062.0" y="604.0" width="3.0" height="1.3" fill="#456f96"/><rect x="2066.0" y="604.0" width="13.0" height="1.3" fill="#8c8c8c"/><rect x="2080.0" y="604.0" width="31.0" height="1.3" fill="#8c8c8c"/><rect x="2062.0" y="606.0" width="7.0" height="1.3" fill="#8c8c8c"/><rect x="2069.0" y="606.0" width="40.0" height="1.3" fill="#8f6a58"/><rect x="2062.0" y="608.0" width="3.0" height="1.3" fill="#456f96"/><rect x="2066.0" y="608.0" width="12.0" height="1.3" fill="#8c8c8c"/><rect x="2079.0" y="608.0" width="35.0" height="1.3" fill="#8c8c8c"/><rect x="2062.0" y="612.0" width="40.0" height="1.3" fill="#4e7a44"/><rect x="2066.0" y="614.0" width="4.0" height="1.3" fill="#3e8f80"/><rect x="2070.0" y="614.0" width="14.0" height="1.3" fill="#8c8c8c"/><rect x="2062.0" y="616.0" width="7.0" height="1.3" fill="#8c8c8c"/><rect x="2069.0" y="616.0" width="35.0" height="1.3" fill="#8f6a58"/><rect x="2062.0" y="620.0" width="34.0" height="1.3" fill="#4e7a44"/><rect x="2062.0" y="622.0" width="7.0" height="1.3" fill="#8c8c8c"/><rect x="2069.0" y="622.0" width="14.0" height="1.3" fill="#8f6a58"/><rect x="2062.0" y="624.0" width="3.0" height="1.3" fill="#456f96"/><rect x="2066.0" y="624.0" width="16.0" height="1.3" fill="#8c8c8c"/><rect x="2083.0" y="624.0" width="42.0" height="1.3" fill="#8c8c8c"/><rect x="2062.0" y="626.0" width="3.0" height="1.3" fill="#456f96"/><rect x="2066.0" y="626.0" width="14.0" height="1.3" fill="#8c8c8c"/><rect x="2081.0" y="626.0" width="25.0" height="1.3" fill="#8c8c8c"/><rect x="2062.0" y="628.0" width="3.0" height="1.3" fill="#456f96"/><rect x="2066.0" y="628.0" width="10.0" height="1.3" fill="#8c8c8c"/><rect x="2077.0" y="628.0" width="39.0" height="1.3" fill="#8c8c8c"/><rect x="2062.0" y="630.0" width="7.0" height="1.3" fill="#8c8c8c"/><rect x="2069.0" y="630.0" width="20.0" height="1.3" fill="#8f6a58"/><rect x="2058.0" y="634.0" width="1.0" height="1.3" fill="#8c8c8c"/><rect x="2060.0" y="634.0" width="5.0" height="1.3" fill="#456f96"/><rect x="2066.0" y="634.0" width="4.0" height="1.3" fill="#8c8c8c"/><rect x="2062.0" y="636.0" width="7.0" height="1.3" fill="#8c8c8c"/><rect x="2069.0" y="636.0" width="19.0" height="1.3" fill="#8f6a58"/><rect x="2058.0" y="638.0" width="1.0" height="1.3" fill="#8c8c8c"/><rect x="2054.0" y="640.0" width="1.0" height="1.3" fill="#8c8c8c"/><rect x="2054.0" y="644.0" width="3.0" height="1.3" fill="#4e7a44"/><rect x="2055.0" y="646.0" width="18.0" height="1.3" fill="#4e7a44"/><rect x="2055.0" y="648.0" width="46.0" height="1.3" fill="#4e7a44"/><rect x="2055.0" y="650.0" width="2.0" height="1.3" fill="#4e7a44"/><rect x="2054.0" y="652.0" width="8.0" height="1.3" fill="#456f96"/><rect x="2063.0" y="652.0" width="23.0" height="1.3" fill="#8c8c8c"/><rect x="2058.0" y="654.0" width="7.0" height="1.3" fill="#8c8c8c"/><rect x="2065.0" y="654.0" width="19.0" height="1.3" fill="#8f6a58"/><rect x="2058.0" y="658.0" width="3.0" height="1.3" fill="#456f96"/><rect x="2062.0" y="660.0" width="38.0" height="1.3" fill="#4e7a44"/><rect x="2062.0" y="662.0" width="7.0" height="1.3" fill="#8c8c8c"/><rect x="2069.0" y="662.0" width="40.0" height="1.3" fill="#8f6a58"/><rect x="2062.0" y="664.0" width="7.0" height="1.3" fill="#8c8c8c"/><rect x="2069.0" y="664.0" width="23.0" height="1.3" fill="#8f6a58"/><rect x="2062.0" y="666.0" width="7.0" height="1.3" fill="#8c8c8c"/><rect x="2069.0" y="666.0" width="22.0" height="1.3" fill="#8f6a58"/><rect x="2062.0" y="670.0" width="42.0" height="1.3" fill="#4e7a44"/><rect x="2062.0" y="672.0" width="3.0" height="1.3" fill="#456f96"/><rect x="2066.0" y="672.0" width="18.0" height="1.3" fill="#8c8c8c"/><rect x="2085.0" y="672.0" width="22.0" height="1.3" fill="#8c8c8c"/><rect x="2062.0" y="674.0" width="7.0" height="1.3" fill="#8c8c8c"/><rect x="2069.0" y="674.0" width="36.0" height="1.3" fill="#8f6a58"/><rect x="2062.0" y="678.0" width="18.0" height="1.3" fill="#4e7a44"/><rect x="2062.0" y="680.0" width="7.0" height="1.3" fill="#8c8c8c"/><rect x="2069.0" y="680.0" width="14.0" height="1.3" fill="#8f6a58"/><rect x="2062.0" y="682.0" width="7.0" height="1.3" fill="#8c8c8c"/><rect x="2069.0" y="682.0" width="30.0" height="1.3" fill="#8f6a58"/><rect x="2062.0" y="686.0" width="20.0" height="1.3" fill="#4e7a44"/><rect x="2062.0" y="688.0" width="7.0" height="1.3" fill="#8c8c8c"/><rect x="2069.0" y="688.0" width="21.0" height="1.3" fill="#8f6a58"/><rect x="2062.0" y="690.0" width="3.0" height="1.3" fill="#456f96"/><rect x="2066.0" y="690.0" width="11.0" height="1.3" fill="#8c8c8c"/><rect x="2078.0" y="690.0" width="43.0" height="1.3" fill="#8c8c8c"/><rect x="2066.0" y="692.0" width="8.0" height="1.3" fill="#8c8c8c"/><rect x="2062.0" y="694.0" width="3.0" height="1.3" fill="#456f96"/><rect x="2066.0" y="694.0" width="16.0" height="1.3" fill="#8c8c8c"/><rect x="2083.0" y="694.0" width="30.0" height="1.3" fill="#8c8c8c"/><rect x="2062.0" y="696.0" width="3.0" height="1.3" fill="#456f96"/><rect x="2066.0" y="696.0" width="17.0" height="1.3" fill="#8c8c8c"/><rect x="2084.0" y="696.0" width="19.0" height="1.3" fill="#8c8c8c"/><rect x="2062.0" y="700.0" width="36.0" height="1.3" fill="#4e7a44"/><rect x="2062.0" y="702.0" width="3.0" height="1.3" fill="#456f96"/><rect x="2066.0" y="702.0" width="10.0" height="1.3" fill="#8c8c8c"/><rect x="2077.0" y="702.0" width="42.0" height="1.3" fill="#8c8c8c"/><rect x="2062.0" y="704.0" width="3.0" height="1.3" fill="#456f96"/><rect x="2066.0" y="704.0" width="18.0" height="1.3" fill="#8c8c8c"/><rect x="2085.0" y="704.0" width="18.0" height="1.3" fill="#8c8c8c"/><rect x="2066.0" y="706.0" width="28.0" height="1.3" fill="#8c8c8c"/><rect x="2062.0" y="708.0" width="3.0" height="1.3" fill="#456f96"/><rect x="2066.0" y="708.0" width="10.0" height="1.3" fill="#8c8c8c"/><rect x="2077.0" y="708.0" width="24.0" height="1.3" fill="#8c8c8c"/><rect x="2062.0" y="710.0" width="7.0" height="1.3" fill="#8c8c8c"/><rect x="2069.0" y="710.0" width="13.0" height="1.3" fill="#8f6a58"/><rect x="2062.0" y="712.0" width="7.0" height="1.3" fill="#8c8c8c"/><rect x="2069.0" y="712.0" width="23.0" height="1.3" fill="#8f6a58"/><rect x="2062.0" y="716.0" width="24.0" height="1.3" fill="#4e7a44"/><rect x="2066.0" y="718.0" width="4.0" height="1.3" fill="#3e8f80"/><rect x="2070.0" y="718.0" width="15.0" height="1.3" fill="#8c8c8c"/><rect x="2062.0" y="720.0" width="3.0" height="1.3" fill="#456f96"/><rect x="2066.0" y="720.0" width="18.0" height="1.3" fill="#8c8c8c"/><rect x="2085.0" y="720.0" width="25.0" height="1.3" fill="#8c8c8c"/><rect x="2062.0" y="722.0" width="3.0" height="1.3" fill="#456f96"/><rect x="2066.0" y="722.0" width="10.0" height="1.3" fill="#8c8c8c"/><rect x="2077.0" y="722.0" width="39.0" height="1.3" fill="#8c8c8c"/><rect x="2062.0" y="724.0" width="4.0" height="1.3" fill="#3e8f80"/><rect x="2066.0" y="724.0" width="30.0" height="1.3" fill="#8c8c8c"/><rect x="2066.0" y="726.0" width="6.0" height="1.3" fill="#8c8c8c"/><rect x="2062.0" y="730.0" width="51.0" height="1.3" fill="#4e7a44"/><rect x="2062.0" y="732.0" width="3.0" height="1.3" fill="#456f96"/><rect x="2066.0" y="732.0" width="17.0" height="1.3" fill="#8c8c8c"/><rect x="2084.0" y="732.0" width="26.0" height="1.3" fill="#8c8c8c"/><rect x="2066.0" y="734.0" width="4.0" height="1.3" fill="#3e8f80"/><rect x="2070.0" y="734.0" width="22.0" height="1.3" fill="#8c8c8c"/><rect x="2062.0" y="738.0" width="33.0" height="1.3" fill="#4e7a44"/><rect x="2062.0" y="740.0" width="7.0" height="1.3" fill="#8c8c8c"/><rect x="2069.0" y="740.0" width="32.0" height="1.3" fill="#8f6a58"/><rect x="2066.0" y="742.0" width="19.0" height="1.3" fill="#8c8c8c"/><rect x="2066.0" y="744.0" width="4.0" height="1.3" fill="#3e8f80"/><rect x="2070.0" y="744.0" width="16.0" height="1.3" fill="#8c8c8c"/><rect x="2062.0" y="748.0" width="48.0" height="1.3" fill="#4e7a44"/><rect x="2062.0" y="750.0" width="4.0" height="1.3" fill="#3e8f80"/><rect x="2066.0" y="750.0" width="20.0" height="1.3" fill="#8c8c8c"/><rect x="2062.0" y="752.0" width="7.0" height="1.3" fill="#8c8c8c"/><rect x="2069.0" y="752.0" width="16.0" height="1.3" fill="#8f6a58"/><rect x="2062.0" y="754.0" width="7.0" height="1.3" fill="#8c8c8c"/><rect x="2069.0" y="754.0" width="32.0" height="1.3" fill="#8f6a58"/><rect x="2062.0" y="756.0" width="3.0" height="1.3" fill="#456f96"/><rect x="2066.0" y="756.0" width="14.0" height="1.3" fill="#8c8c8c"/><rect x="2081.0" y="756.0" width="18.0" height="1.3" fill="#8c8c8c"/><rect x="2062.0" y="760.0" width="18.0" height="1.3" fill="#4e7a44"/><rect x="2062.0" y="762.0" width="7.0" height="1.3" fill="#8c8c8c"/><rect x="2069.0" y="762.0" width="20.0" height="1.3" fill="#8f6a58"/><rect x="2066.0" y="764.0" width="7.0" height="1.3" fill="#8c8c8c"/><rect x="2062.0" y="766.0" width="3.0" height="1.3" fill="#456f96"/><rect x="2066.0" y="766.0" width="17.0" height="1.3" fill="#8c8c8c"/><rect x="2084.0" y="766.0" width="28.0" height="1.3" fill="#8c8c8c"/><rect x="2062.0" y="768.0" width="3.0" height="1.3" fill="#456f96"/><rect x="2066.0" y="768.0" width="14.0" height="1.3" fill="#8c8c8c"/><rect x="2081.0" y="768.0" width="39.0" height="1.3" fill="#8c8c8c"/><rect x="2062.0" y="770.0" width="3.0" height="1.3" fill="#456f96"/><rect x="2066.0" y="770.0" width="11.0" height="1.3" fill="#8c8c8c"/><rect x="2078.0" y="770.0" width="22.0" height="1.3" fill="#8c8c8c"/><rect x="2058.0" y="774.0" width="1.0" height="1.3" fill="#8c8c8c"/><rect x="2060.0" y="774.0" width="5.0" height="1.3" fill="#456f96"/><rect x="2066.0" y="774.0" width="4.0" height="1.3" fill="#8c8c8c"/><rect x="2062.0" y="776.0" width="7.0" height="1.3" fill="#8c8c8c"/><rect x="2069.0" y="776.0" width="16.0" height="1.3" fill="#8f6a58"/><rect x="2058.0" y="778.0" width="1.0" height="1.3" fill="#8c8c8c"/><rect x="2054.0" y="780.0" width="1.0" height="1.3" fill="#8c8c8c"/><rect x="2054.0" y="784.0" width="3.0" height="1.3" fill="#4e7a44"/><rect x="2055.0" y="786.0" width="20.0" height="1.3" fill="#4e7a44"/><rect x="2055.0" y="788.0" width="60.0" height="1.3" fill="#4e7a44"/><rect x="2055.0" y="790.0" width="2.0" height="1.3" fill="#4e7a44"/><rect x="2054.0" y="792.0" width="8.0" height="1.3" fill="#456f96"/><rect x="2063.0" y="792.0" width="18.0" height="1.3" fill="#8c8c8c"/><rect x="2058.0" y="794.0" width="7.0" height="1.3" fill="#8c8c8c"/><rect x="2065.0" y="794.0" width="18.0" height="1.3" fill="#8f6a58"/><rect x="2058.0" y="798.0" width="3.0" height="1.3" fill="#456f96"/><rect x="2062.0" y="800.0" width="22.0" height="1.3" fill="#4e7a44"/><rect x="2066.0" y="802.0" width="18.0" height="1.3" fill="#8c8c8c"/><rect x="2066.0" y="804.0" width="16.0" height="1.3" fill="#8c8c8c"/><rect x="2062.0" y="806.0" width="7.0" height="1.3" fill="#8c8c8c"/><rect x="2069.0" y="806.0" width="18.0" height="1.3" fill="#8f6a58"/><rect x="2062.0" y="808.0" width="7.0" height="1.3" fill="#8c8c8c"/><rect x="2069.0" y="808.0" width="14.0" height="1.3" fill="#8f6a58"/><rect x="2062.0" y="810.0" width="7.0" height="1.3" fill="#8c8c8c"/><rect x="2069.0" y="810.0" width="28.0" height="1.3" fill="#8f6a58"/><rect x="2062.0" y="812.0" width="7.0" height="1.3" fill="#8c8c8c"/><rect x="2069.0" y="812.0" width="23.0" height="1.3" fill="#8f6a58"/><rect x="2062.0" y="816.0" width="26.0" height="1.3" fill="#4e7a44"/><rect x="2066.0" y="818.0" width="4.0" height="1.3" fill="#3e8f80"/><rect x="2070.0" y="818.0" width="30.0" height="1.3" fill="#8c8c8c"/><rect x="2062.0" y="820.0" width="7.0" height="1.3" fill="#8c8c8c"/><rect x="2069.0" y="820.0" width="15.0" height="1.3" fill="#8f6a58"/><rect x="2062.0" y="822.0" width="3.0" height="1.3" fill="#456f96"/><rect x="2066.0" y="822.0" width="13.0" height="1.3" fill="#8c8c8c"/><rect x="2080.0" y="822.0" width="41.0" height="1.3" fill="#8c8c8c"/><rect x="2066.0" y="824.0" width="19.0" height="1.3" fill="#8c8c8c"/><rect x="2062.0" y="826.0" width="3.0" height="1.3" fill="#456f96"/><rect x="2066.0" y="826.0" width="12.0" height="1.3" fill="#8c8c8c"/><rect x="2079.0" y="826.0" width="10.0" height="1.3" fill="#8c8c8c"/><rect x="2058.0" y="830.0" width="1.0" height="1.3" fill="#8c8c8c"/><rect x="2060.0" y="830.0" width="5.0" height="1.3" fill="#456f96"/><rect x="2066.0" y="830.0" width="4.0" height="1.3" fill="#8c8c8c"/><rect x="2062.0" y="832.0" width="7.0" height="1.3" fill="#8c8c8c"/><rect x="2069.0" y="832.0" width="19.0" height="1.3" fill="#8f6a58"/><rect x="2058.0" y="834.0" width="1.0" height="1.3" fill="#8c8c8c"/><rect x="2054.0" y="836.0" width="1.0" height="1.3" fill="#8c8c8c"/><rect x="2054.0" y="840.0" width="3.0" height="1.3" fill="#4e7a44"/><rect x="2055.0" y="842.0" width="32.0" height="1.3" fill="#4e7a44"/><rect x="2055.0" y="844.0" width="55.0" height="1.3" fill="#4e7a44"/><rect x="2055.0" y="846.0" width="2.0" height="1.3" fill="#4e7a44"/></svg>
<div style="left:2165px;top:4px;width:24px;height:104.5px;background:#424242"></div>
<div style="left:2165px;top:357.5px;width:24px;height:3.5px;background:#8a8a8a"></div>
</div><div style="left:717px;top:84px;width:1.7px;height:1701px;background:#2b2b2b"></div><div id="gap"></div>
<div id="rp">
<div class="tr" style="top:30.60px"><svg width="18" height="18" viewBox="0 0 18 18"><path d="M0.4 0.4L17.2 8.8L0.4 17.2Z" fill="#c6c6c6"/></svg><div class="t">UI-标签类[Label]</div></div>
<div class="tr" style="top:84.85px"><svg width="18" height="18" viewBox="0 0 18 18"><path d="M0.4 0.4L17.2 8.8L0.4 17.2Z" fill="#c6c6c6"/></svg><div class="t">UI-垂直容器[Vertical]</div></div>
<div class="tr" style="top:139.10px"><svg width="18" height="18" viewBox="0 0 18 18"><path d="M0.4 0.4L17.2 8.8L0.4 17.2Z" fill="#c6c6c6"/></svg><div class="t">UI-单选按钮类[RadioButton]</div></div>
<div class="tr" style="top:193.35px"><svg width="18" height="18" viewBox="0 0 18 18"><path d="M0.4 0.4L17.2 8.8L0.4 17.2Z" fill="#c6c6c6"/></svg><div class="t">UI-单选按钮组类[RadioGroup]</div></div>
<div class="tr" style="top:247.60px"><svg width="18" height="18" viewBox="0 0 18 18"><path d="M0.4 0.4L17.2 8.8L0.4 17.2Z" fill="#c6c6c6"/></svg><div class="t">UI-复选框类[CheckBox]</div></div>
<div class="tr" style="top:301.85px"><svg width="18" height="18" viewBox="0 0 18 18"><path d="M0.4 0.4L17.2 8.8L0.4 17.2Z" fill="#c6c6c6"/></svg><div class="t">UI-界面视图[IOSView]</div></div>
<div class="tr" style="top:356.10px"><svg width="18" height="18" viewBox="0 0 18 18"><path d="M0.4 0.4L17.2 8.8L0.4 17.2Z" fill="#c6c6c6"/></svg><div class="t">UI-空白站位[Space]</div></div>
<div class="tr" style="top:410.35px"><svg width="18" height="18" viewBox="0 0 18 18"><path d="M0.4 0.4L17.2 8.8L0.4 17.2Z" fill="#c6c6c6"/></svg><div class="t">UI-输入框类[Input]</div></div>
<div class="tr" style="top:464.60px"><svg width="18" height="18" viewBox="0 0 18 18"><path d="M0.4 0.4L17.2 8.8L0.4 17.2Z" fill="#c6c6c6"/></svg><div class="t">UI-水平容器[Horizontal]</div></div>
<div class="tr" style="top:518.85px"><svg width="18" height="18" viewBox="0 0 18 18"><path d="M0.4 0.4L17.2 8.8L0.4 17.2Z" fill="#c6c6c6"/></svg><div class="t">WebView 控件[WebView]</div></div>
<div class="tr" style="top:573.10px"><svg width="18" height="18" viewBox="0 0 18 18"><path d="M0.4 0.4L17.2 8.8L0.4 17.2Z" fill="#c6c6c6"/></svg><div class="t">YoloV5目标检测[YoloV5]</div></div>
<div class="tr" style="top:627.35px"><svg width="18" height="18" viewBox="0 0 18 18"><path d="M0.4 0.4L17.2 8.8L0.4 17.2Z" fill="#c6c6c6"/></svg><div class="t">打印[print]</div></div>
<div class="tr" style="top:681.60px"><svg width="18" height="18" viewBox="0 0 18 18"><path d="M0.4 0.4L17.2 8.8L0.4 17.2Z" fill="#c6c6c6"/></svg><div class="t">检测目标类[Detect]</div></div>
<div class="tr" style="top:735.85px"><svg width="18" height="18" viewBox="0 0 18 18"><path d="M0.4 0.4L17.2 8.8L0.4 17.2Z" fill="#c6c6c6"/></svg><div class="t">剪贴板类[clipboard]</div></div>
<div class="tr" style="top:790.10px"><svg width="18" height="18" viewBox="0 0 18 18"><path d="M0.4 0.4L17.2 8.8L0.4 17.2Z" fill="#c6c6c6"/></svg><div class="t">脚本项目[project]</div></div>
<div class="tr" style="top:844.35px"><svg width="18" height="18" viewBox="0 0 18 18"><path d="M0.4 0.4L17.2 8.8L0.4 17.2Z" fill="#c6c6c6"/></svg><div class="t">矩形类[rect]</div></div>
<div class="tr" style="top:898.60px"><svg width="18" height="18" viewBox="0 0 18 18"><path d="M0.4 0.4L17.2 8.8L0.4 17.2Z" fill="#c6c6c6"/></svg><div class="t">快捷指令[shortcut]</div></div>
<div class="tr" style="top:952.85px"><svg width="18" height="18" viewBox="0 0 18 18"><path d="M0.4 0.4L17.2 8.8L0.4 17.2Z" fill="#c6c6c6"/></svg><div class="t">快捷指令代理服务[shortcutProxy]</div></div>
<div class="tr" style="top:1007.10px"><svg width="18" height="18" viewBox="0 0 18 18"><path d="M0.4 0.4L17.2 8.8L0.4 17.2Z" fill="#c6c6c6"/></svg><div class="t">配置[config]</div></div>
<div class="tr" style="top:1061.35px"><svg width="18" height="18" viewBox="0 0 18 18"><path d="M0.4 0.4L17.2 8.8L0.4 17.2Z" fill="#c6c6c6"/></svg><div class="t">屏幕类[screen]</div></div>
<div class="tr" style="top:1115.60px"><svg width="18" height="18" viewBox="0 0 18 18"><path d="M0.4 0.4L17.2 8.8L0.4 17.2Z" fill="#c6c6c6"/></svg><div class="t">事件[event]</div></div>
<div class="tr" style="top:1169.85px"><svg width="18" height="18" viewBox="0 0 18 18"><path d="M0.4 0.4L17.2 8.8L0.4 17.2Z" fill="#c6c6c6"/></svg><div class="t">随机数[RJrxn1afZqW7]</div></div>
<div class="tr" style="top:1224.10px"><svg width="18" height="18" viewBox="0 0 18 18"><path d="M0.4 0.4L17.2 8.8L0.4 17.2Z" fill="#c6c6c6"/></svg><div class="t">图色视觉[opencv]</div></div>
<div class="tr" style="top:1278.35px"><svg width="18" height="18" viewBox="0 0 18 18"><path d="M0.4 0.8H17.2L8.8 17.4Z" fill="#c6c6c6"/></svg><div class="t">图像类[Image]</div></div>
<div style="left:0;top:1330.7px;width:290px;height:271.3px;background:#2c2c2c"></div>
<div class="ch" style="top:1333.00px">ocr ocr</div>
<div class="ch" style="top:1371.55px">base64 base64</div>
<div class="ch" style="top:1410.10px">getMat 获取Mat对象</div>
<div class="ch" style="top:1448.65px">readMat 转换Mat为Image</div>
<div class="ch" style="top:1487.20px">readBase64 转换Base64为Image</div>
<div class="ch" style="top:1525.75px">readFile 读取图片文件</div>
<div class="ch" style="top:1564.30px">close 释放图像</div>
<div class="tr" style="top:1602.00px"><svg width="18" height="18" viewBox="0 0 18 18"><path d="M0.4 0.4L17.2 8.8L0.4 17.2Z" fill="#c6c6c6"/></svg><div class="t">吐司[toast]</div></div>
<div class="tr" style="top:1656.15px"><svg width="18" height="18" viewBox="0 0 18 18"><path d="M0.4 0.4L17.2 8.8L0.4 17.2Z" fill="#c6c6c6"/></svg><div class="t">线条类[Line]</div></div>
<div style="left:0;top:0;width:290px;height:48px;background:#3c3c3c;border-left:2px solid #303030;border-bottom:2px solid #303030"></div>
<div style="left:9.5px;top:4px;width:300px;height:38.5px;border:2px solid #8c8c8c;border-radius:10px;background:#3b3b3b"></div>
<svg width="26" height="26" style="left:16px;top:11px" viewBox="0 0 26 26" fill="none" stroke="#d4d4d4" stroke-width="2.2" stroke-linecap="round"><circle cx="11.3" cy="11" r="8.6"/><path d="M17.6 17.4L22 22"/></svg>
</div>
</body>
</html>
